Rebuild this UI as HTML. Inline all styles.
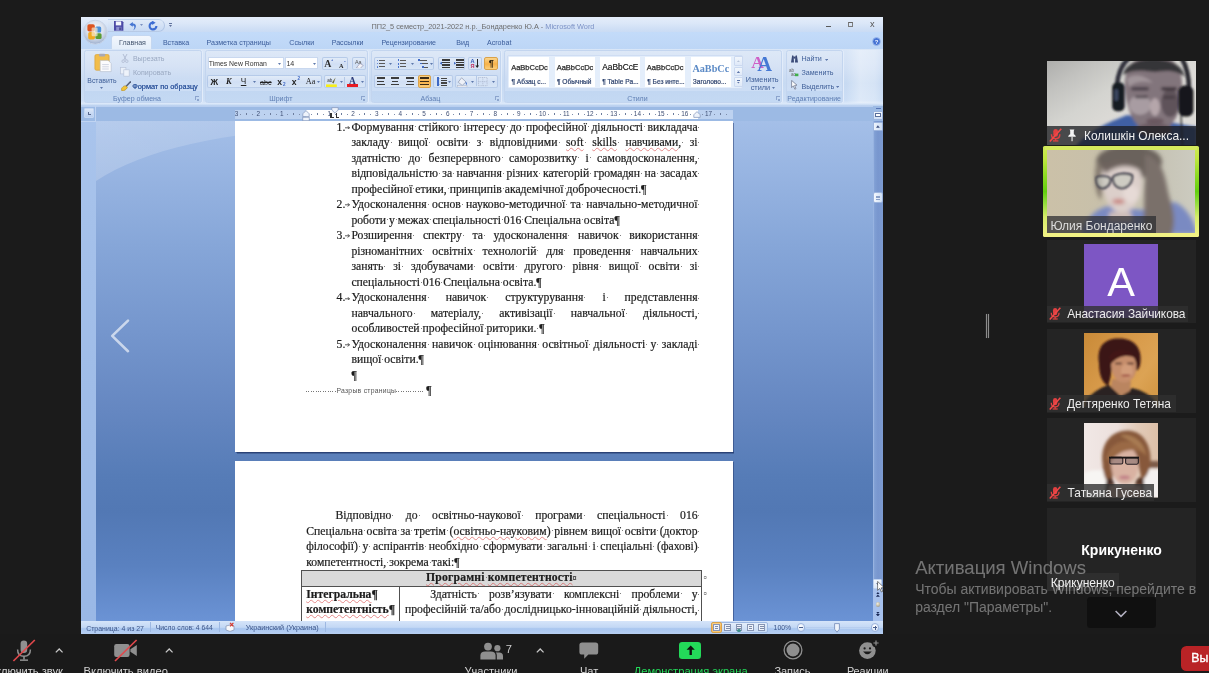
<!DOCTYPE html>
<html>
<head>
<meta charset="utf-8">
<style>
*{box-sizing:border-box;margin:0;padding:0}
html,body{width:1209px;height:673px;overflow:hidden;background:#1b1b1b;font-family:"Liberation Sans",sans-serif;}
#stage{position:absolute;left:0;top:0;width:1209px;height:673px;overflow:hidden;background:#1b1b1b}
#word{position:absolute;left:0;top:0;width:1209px;height:673px;filter:blur(.6px);will-change:transform}
#wclip{position:absolute;left:80.6px;top:17px;width:802.7px;height:617.8px;overflow:hidden}
#wclip>#word{left:-80.6px;top:-17px}
.dl{font-family:"Liberation Serif",serif;font-size:11.7px;color:#1c1c1c;-webkit-text-stroke:.2px #1c1c1c}
.dl i.d{display:inline-block;width:0;height:0;position:relative;vertical-align:baseline}
.dl i.d::after{content:"";position:absolute;left:1px;top:-4.2px;width:1px;height:1px;background:#555;border-radius:50%}
.dl b.pm{font-weight:400;font-family:"Liberation Serif",serif;font-size:11.7px;color:#1c1c1c}
.dl u.sq{text-decoration:underline wavy rgba(215,70,70,.6) .55px;text-underline-offset:.8px}
#zoomui{position:absolute;left:0;top:0;width:1209px;height:673px;filter:blur(.3px);will-change:transform}
</style>
</head>
<body>
<div id="stage">
<div id="wclip"><div id="word">
<div style="position:absolute;left:80.60px;top:17.00px;width:802.70px;height:617.80px;background:#c2d8f5;"></div><div style="position:absolute;left:80.60px;top:17.00px;width:802.70px;height:15.50px;background:linear-gradient(#e4edfa 0%,#dbe7f8 40%,#cfdff5 75%,#c8daf4 100%);"></div><div style="position:absolute;left:80.60px;top:32.30px;width:802.70px;height:17.00px;background:linear-gradient(#c3dbf9,#bdd6f6);"></div><div style="position:absolute;left:80.60px;top:49.00px;width:802.70px;height:56.50px;background:linear-gradient(#d9e6f7 0%,#d3e1f5 30%,#c7daf2 60%,#ccdef5 90%,#dce9f9 96%,#b5cdee 100%);"></div><div style="position:absolute;left:846.00px;top:50.30px;width:36.00px;height:52.70px;background:linear-gradient(90deg,rgba(255,255,255,0),rgba(255,255,255,.35) 40%,rgba(255,255,255,.25) 80%,rgba(255,255,255,.05));"></div><svg style="position:absolute;left:82.40px;top:18.60px;" width="26.4" height="26.4" viewBox="0 0 26.4 26.4">
<defs><radialGradient id="ob" cx="50%" cy="38%" r="62%"><stop offset="0" stop-color="#f6f8fc"/><stop offset=".55" stop-color="#dbe2ee"/><stop offset=".86" stop-color="#b3c1d9"/><stop offset="1" stop-color="#97abcd"/></radialGradient></defs>
<circle cx="13.2" cy="13.2" r="12" fill="url(#ob)" stroke="#c9d5e8" stroke-width="1"/>
<rect x="5.4" y="5.2" width="7.4" height="7.4" rx="1.8" fill="#dc5420"/>
<rect x="13.2" y="7.6" width="6" height="6" rx="1.5" fill="#4a90da"/>
<rect x="6.2" y="13" width="6.8" height="7.4" rx="1.7" fill="#f0aa22"/>
<rect x="13.4" y="14.2" width="6.2" height="5.8" rx="1.5" fill="#5c9c32"/>
<rect x="9.6" y="8.6" width="6" height="8.6" rx="1.2" fill="#f6ead0" opacity=".7"/>
</svg><div style="position:absolute;left:107.50px;top:19.00px;width:57.00px;height:12.80px;border:1px solid rgba(150,175,215,.55);border-left:none;border-top-color:rgba(170,195,230,.4);border-radius:0 7px 7px 0;background:linear-gradient(#e0eaf8,#c8daf3);"></div><svg style="position:absolute;left:114.20px;top:20.80px;" width="9.4" height="9.8" viewBox="0 0 9.4 9.8"><path d="M0 0H8.2L9.4 1.2V9.8H0Z" fill="#4c4aa6"/><rect x="1.8" y="0.4" width="5.4" height="4" fill="#f4f6fc"/><rect x="2.2" y="5.8" width="5.2" height="4" fill="#8e92d0"/><rect x="5.4" y="6.4" width="1.3" height="2.8" fill="#35357c"/></svg><svg style="position:absolute;left:127.60px;top:20.60px;" width="10" height="10" viewBox="0 0 10 10"><path d="M1.4 3.4 L4.8 1 L4.8 2.6 C8.6 2.4 9.2 6.8 5.2 9.6 C7 6.8 6.6 4.6 4.8 4.6 L4.8 5.8Z" fill="#4676d2"/></svg><svg style="position:absolute;left:140.30px;top:24.32px;" width="3.0" height="2.0" viewBox="0 0 3.0 2.0"><path d="M0 0 L3.0 0 L1.5 1.875Z" fill="#7a90c0"/></svg><svg style="position:absolute;left:147.80px;top:20.60px;" width="10" height="10" viewBox="0 0 10 10"><path d="M5 1.6 A3.4 3.4 0 1 0 8.4 5" fill="none" stroke="#3d6dd2" stroke-width="2.1"/><path d="M4.2 -0.4 L7.6 1.8 L4.2 4Z" fill="#3d6dd2"/></svg><div style="position:absolute;left:169.30px;top:22.80px;width:3.20px;height:0.80px;background:#60729c"></div><svg style="position:absolute;left:169.40px;top:24.73px;" width="3.0" height="2.0" viewBox="0 0 3.0 2.0"><path d="M0 0 L3.0 0 L1.5 1.875Z" fill="#60729c"/></svg><div style="position:absolute;left:371.4px;top:21.6px;height:10px;line-height:10px;font-size:7.33px;white-space:nowrap;color:#6d6d6d;font-family:'Liberation Sans'">ПП2_5 семестр_2021-2022 н.р._Бондаренко Ю.А - <span style="color:#7c92c6">Microsoft Word</span></div><div style="position:absolute;left:826.00px;top:26.20px;width:5.20px;height:1.30px;background:#5a5a5a"></div><div style="position:absolute;left:847.80px;top:22.00px;width:5.00px;height:4.60px;border:1px solid #7c7c7c;border-top:1.8px solid #666;"></div><div style="position:absolute;top:18.67px;height:11.96px;line-height:11.96px;font-size:9.2px;color:#555;font-weight:400;font-family:'Liberation Sans';white-space:nowrap;;left:672.40px;width:400px;text-align:center;">x</div><div style="position:absolute;left:111.40px;top:35.20px;width:41.00px;height:14.30px;border:1px solid #c4d7f1;border-bottom:none;border-radius:3px 3px 0 0;background:linear-gradient(#f3f7fd,#e4eefa);"></div><div style="position:absolute;top:38.95px;height:9.20px;line-height:9.20px;font-size:7.08px;color:#44556f;font-weight:400;font-family:'Liberation Sans';white-space:nowrap;;left:119.00px;">Главная</div><div style="position:absolute;top:38.95px;height:9.20px;line-height:9.20px;font-size:7.08px;color:#3a5c9a;font-weight:400;font-family:'Liberation Sans';white-space:nowrap;;left:162.90px;">Вставка</div><div style="position:absolute;top:38.95px;height:9.20px;line-height:9.20px;font-size:7.08px;color:#3a5c9a;font-weight:400;font-family:'Liberation Sans';white-space:nowrap;;left:206.60px;">Разметка страницы</div><div style="position:absolute;top:38.95px;height:9.20px;line-height:9.20px;font-size:7.08px;color:#3a5c9a;font-weight:400;font-family:'Liberation Sans';white-space:nowrap;;left:289.30px;">Ссылки</div><div style="position:absolute;top:38.95px;height:9.20px;line-height:9.20px;font-size:7.08px;color:#3a5c9a;font-weight:400;font-family:'Liberation Sans';white-space:nowrap;;left:331.70px;">Рассылки</div><div style="position:absolute;top:38.95px;height:9.20px;line-height:9.20px;font-size:7.08px;color:#3a5c9a;font-weight:400;font-family:'Liberation Sans';white-space:nowrap;;left:381.40px;">Рецензирование</div><div style="position:absolute;top:38.95px;height:9.20px;line-height:9.20px;font-size:7.08px;color:#3a5c9a;font-weight:400;font-family:'Liberation Sans';white-space:nowrap;;left:456.30px;">Вид</div><div style="position:absolute;top:38.95px;height:9.20px;line-height:9.20px;font-size:7.08px;color:#3a5c9a;font-weight:400;font-family:'Liberation Sans';white-space:nowrap;;left:487.00px;">Acrobat</div><svg style="position:absolute;left:871.80px;top:36.60px;" width="9" height="9" viewBox="0 0 9 9"><circle cx="4.5" cy="4.5" r="3.9" fill="#4673d4" stroke="#a4c0ee" stroke-width=".8"/><text x="4.5" y="6.8" font-size="6" font-weight="700" fill="#eef4ff" text-anchor="middle" font-family="Liberation Sans">?</text></svg><div style="position:absolute;left:83.60px;top:50.30px;width:118.20px;height:52.70px;border:1px solid #c3d5ef;border-radius:2.5px;box-shadow:1px 0 0 #e2ecfa;background:linear-gradient(#dde8f7 0%,#d7e3f5 28%,#cbdcf3 55%,#cddef5 78%,#c2d7f2 79%,#c4d9f3 100%);"></div><div style="position:absolute;top:94.47px;height:9.17px;line-height:9.17px;font-size:7.05px;color:#5f7fb4;font-weight:400;font-family:'Liberation Sans';white-space:nowrap;;left:-63.00px;width:400px;text-align:center;">Буфер обмена</div><div style="position:absolute;left:195.30px;top:96.20px;width:4.00px;height:4.00px;border-left:1px solid #7f98c4;border-top:1px solid #7f98c4;opacity:.8"></div><div style="position:absolute;left:197.30px;top:98.60px;width:2.00px;height:2.00px;background:#7f98c4;opacity:.8"></div><svg style="position:absolute;left:93.60px;top:53.40px;" width="19" height="20" viewBox="0 0 19 20">
<rect x="0.9" y="1.6" width="14.2" height="15.6" rx="1.4" fill="#f2bd4a" stroke="#d7a23a" stroke-width=".7"/>
<rect x="5" y="0.8" width="6.2" height="2.6" rx="1" fill="#a9a9b4"/>
<path d="M6.2 7.4 H14.2 L17.2 10.4 V18.6 H6.2Z" fill="#fbfbfd" stroke="#b4bccb" stroke-width=".6"/>
<path d="M8.2 11.6H14.8M8.2 13.8H14.8M8.2 16H14.8" stroke="#c5ccda" stroke-width=".8"/></svg><div style="position:absolute;top:76.66px;height:8.97px;line-height:8.97px;font-size:6.9px;color:#3f5f98;font-weight:400;font-family:'Liberation Sans';white-space:nowrap;;left:-98.10px;width:400px;text-align:center;">Вставить</div><svg style="position:absolute;left:100.20px;top:86.53px;" width="3.0" height="2.0" viewBox="0 0 3.0 2.0"><path d="M0 0 L3.0 0 L1.5 1.875Z" fill="#5f79ac"/></svg><svg style="position:absolute;left:121.40px;top:54.40px;" width="8" height="9" viewBox="0 0 8 9"><path d="M2 0 L5.2 6M6 0 L2.8 6" stroke="#aeb9d0" stroke-width=".9"/><circle cx="2.2" cy="7.2" r="1.3" fill="none" stroke="#aeb9d0" stroke-width=".8"/><circle cx="5.8" cy="7.2" r="1.3" fill="none" stroke="#aeb9d0" stroke-width=".8"/></svg><div style="position:absolute;top:55.33px;height:9.23px;line-height:9.23px;font-size:7.1px;color:#9aa9c2;font-weight:400;font-family:'Liberation Sans';white-space:nowrap;;left:132.90px;">Вырезать</div><svg style="position:absolute;left:120.40px;top:67.40px;" width="10" height="10" viewBox="0 0 10 10"><rect x=".5" y=".5" width="5.4" height="6.4" fill="#eaf0f9" stroke="#b9c4d9" stroke-width=".7"/><rect x="3.8" y="2.8" width="5.4" height="6.4" fill="#eef3fa" stroke="#b9c4d9" stroke-width=".7"/></svg><div style="position:absolute;top:68.84px;height:9.23px;line-height:9.23px;font-size:7.1px;color:#9aa9c2;font-weight:400;font-family:'Liberation Sans';white-space:nowrap;;left:132.90px;">Копировать</div><svg style="position:absolute;left:120.60px;top:80.60px;" width="10.4" height="10.4" viewBox="0 0 10.4 10.4"><path d="M9.8 0.4 L5 5.6" stroke="#55607a" stroke-width="1.5"/><path d="M0.6 7.6 C2.6 4 5.2 4.4 6.4 6.4 C5.2 8.6 3.4 10.2 0.6 9.6Z" fill="#f2c436" stroke="#b5891a" stroke-width=".6"/></svg><div style="position:absolute;top:81.79px;height:9.52px;line-height:9.52px;font-size:7.32px;color:#33599f;font-weight:400;font-family:'Liberation Sans';white-space:nowrap;text-shadow:0 0 .4px #33599f;;left:132.20px;">Формат по образцу</div><div style="position:absolute;left:205.20px;top:50.30px;width:162.60px;height:52.70px;border:1px solid #c3d5ef;border-radius:2.5px;box-shadow:1px 0 0 #e2ecfa;background:linear-gradient(#dde8f7 0%,#d7e3f5 28%,#cbdcf3 55%,#cddef5 78%,#c2d7f2 79%,#c4d9f3 100%);"></div><div style="position:absolute;top:94.47px;height:9.17px;line-height:9.17px;font-size:7.05px;color:#5f7fb4;font-weight:400;font-family:'Liberation Sans';white-space:nowrap;;left:80.80px;width:400px;text-align:center;">Шрифт</div><div style="position:absolute;left:361.30px;top:96.20px;width:4.00px;height:4.00px;border-left:1px solid #7f98c4;border-top:1px solid #7f98c4;opacity:.8"></div><div style="position:absolute;left:363.30px;top:98.60px;width:2.00px;height:2.00px;background:#7f98c4;opacity:.8"></div><div style="position:absolute;left:207.70px;top:57.20px;width:76.00px;height:12.20px;background:#fff;border:1px solid #c9d8ef;"></div><div style="position:absolute;top:60.08px;height:8.93px;line-height:8.93px;font-size:6.87px;color:#333;font-weight:400;font-family:'Liberation Sans';white-space:nowrap;;left:208.80px;">Times New Roman</div><svg style="position:absolute;left:278.30px;top:62.73px;" width="3.0" height="2.0" viewBox="0 0 3.0 2.0"><path d="M0 0 L3.0 0 L1.5 1.875Z" fill="#5f79ac"/></svg><div style="position:absolute;left:285.40px;top:57.20px;width:32.40px;height:12.20px;background:#fff;border:1px solid #c9d8ef;"></div><div style="position:absolute;top:60.23px;height:9.23px;line-height:9.23px;font-size:7.1px;color:#333;font-weight:400;font-family:'Liberation Sans';white-space:nowrap;;left:286.40px;">14</div><svg style="position:absolute;left:312.50px;top:62.73px;" width="3.0" height="2.0" viewBox="0 0 3.0 2.0"><path d="M0 0 L3.0 0 L1.5 1.875Z" fill="#5f79ac"/></svg><div style="position:absolute;left:321.50px;top:56.80px;width:26.70px;height:13.10px;border:1px solid rgba(160,185,225,.6);border-radius:2px;background:linear-gradient(#e1ebf8,#d1dff4 55%,#d7e5f6);"></div><div style="position:absolute;top:57.88px;height:12.74px;line-height:12.74px;font-size:9.8px;color:#2b2b2b;font-weight:700;font-family:'Liberation Serif';white-space:nowrap;;left:127.70px;width:400px;text-align:center;">A</div><div style="position:absolute;left:331.20px;top:59.20px;width:2.20px;height:1.60px;background:#4a6bc0;clip-path:polygon(50% 0,100% 100%,0 100%)"></div><div style="position:absolute;top:61.66px;height:8.19px;line-height:8.19px;font-size:6.3px;color:#2b2b2b;font-weight:700;font-family:'Liberation Serif';white-space:nowrap;;left:141.20px;width:400px;text-align:center;">A</div><div style="position:absolute;left:343.80px;top:60.60px;width:2.20px;height:1.60px;background:#4a6bc0;clip-path:polygon(0 0,100% 0,50% 100%)"></div><div style="position:absolute;left:351.60px;top:56.80px;width:14.20px;height:13.10px;border:1px solid rgba(160,185,225,.6);border-radius:2px;background:linear-gradient(#e1ebf8,#d1dff4 55%,#d7e5f6);"></div><svg style="position:absolute;left:354.00px;top:58.80px;" width="10" height="9.6" viewBox="0 0 10 9.6"><text x="1" y="5.4" font-size="5.4" fill="#555" font-family="Liberation Sans">Aa</text><path d="M2.4 8.8 L6 4.4 L9.2 6.4 L6 9.6Z" fill="#f4f4f8" stroke="#8c8ca8" stroke-width=".6"/></svg><div style="position:absolute;left:207.30px;top:75.30px;width:114.50px;height:12.50px;border:1px solid rgba(160,185,225,.6);border-radius:2px;background:linear-gradient(#e1ebf8,#d1dff4 55%,#d7e5f6);"></div><div style="position:absolute;top:76.69px;height:10.92px;line-height:10.92px;font-size:8.4px;color:#222;font-weight:700;font-family:'Liberation Sans';white-space:nowrap;;left:14.40px;width:400px;text-align:center;">Ж</div><div style="position:absolute;top:76.69px;height:10.92px;line-height:10.92px;font-size:8.4px;color:#222;font-weight:700;font-family:'Liberation Serif';white-space:nowrap;font-style:italic;;left:28.80px;width:400px;text-align:center;">К</div><div style="position:absolute;top:76.62px;height:10.66px;line-height:10.66px;font-size:8.2px;color:#222;font-weight:400;font-family:'Liberation Sans';white-space:nowrap;text-decoration:underline;;left:43.60px;width:400px;text-align:center;">Ч</div><svg style="position:absolute;left:252.80px;top:81.12px;" width="3.0" height="2.0" viewBox="0 0 3.0 2.0"><path d="M0 0 L3.0 0 L1.5 1.875Z" fill="#5f79ac"/></svg><div style="position:absolute;top:77.57px;height:9.36px;line-height:9.36px;font-size:7.2px;color:#222;font-weight:400;font-family:'Liberation Sans';white-space:nowrap;text-decoration:line-through;;left:65.80px;width:400px;text-align:center;">abc</div><div style="position:absolute;top:76.66px;height:11.18px;line-height:11.18px;font-size:8.6px;color:#222;font-weight:700;font-family:'Liberation Sans';white-space:nowrap;;left:79.60px;width:400px;text-align:center;">x</div><div style="position:absolute;top:82.16px;height:5.98px;line-height:5.98px;font-size:4.6px;color:#3d67c4;font-weight:700;font-family:'Liberation Sans';white-space:nowrap;;left:84.20px;width:400px;text-align:center;">2</div><div style="position:absolute;top:76.66px;height:11.18px;line-height:11.18px;font-size:8.6px;color:#222;font-weight:700;font-family:'Liberation Sans';white-space:nowrap;;left:94.20px;width:400px;text-align:center;">x</div><div style="position:absolute;top:76.16px;height:5.98px;line-height:5.98px;font-size:4.6px;color:#3d67c4;font-weight:700;font-family:'Liberation Sans';white-space:nowrap;;left:98.80px;width:400px;text-align:center;">2</div><div style="position:absolute;top:76.92px;height:10.66px;line-height:10.66px;font-size:8.2px;color:#222;font-weight:400;font-family:'Liberation Serif';white-space:nowrap;;left:110.60px;width:400px;text-align:center;">Aa</div><svg style="position:absolute;left:316.70px;top:81.12px;" width="3.0" height="2.0" viewBox="0 0 3.0 2.0"><path d="M0 0 L3.0 0 L1.5 1.875Z" fill="#5f79ac"/></svg><div style="position:absolute;left:323.70px;top:75.30px;width:42.10px;height:12.50px;border:1px solid rgba(160,185,225,.6);border-radius:2px;background:linear-gradient(#e1ebf8,#d1dff4 55%,#d7e5f6);"></div><svg style="position:absolute;left:325.60px;top:76.60px;" width="11" height="10.6" viewBox="0 0 11 10.6"><text x="1.2" y="5.2" font-size="4.6" fill="#333" font-family="Liberation Sans">ab</text><path d="M9.6 0.6 L6 5.4 L7.6 6.4Z" fill="#6a6a3a"/><rect x="0" y="7.4" width="10.8" height="2.8" fill="#f7ee19"/></svg><svg style="position:absolute;left:339.80px;top:81.12px;" width="3.0" height="2.0" viewBox="0 0 3.0 2.0"><path d="M0 0 L3.0 0 L1.5 1.875Z" fill="#5f79ac"/></svg><div style="position:absolute;left:344.20px;top:76.60px;width:0.80px;height:10.00px;background:#b4c8e6"></div><div style="position:absolute;top:74.84px;height:12.22px;line-height:12.22px;font-size:9.4px;color:#2a3a78;font-weight:700;font-family:'Liberation Serif';white-space:nowrap;;left:152.40px;width:400px;text-align:center;">A</div><div style="position:absolute;left:347.00px;top:84.00px;width:10.80px;height:2.60px;background:#e81c24"></div><svg style="position:absolute;left:360.50px;top:81.12px;" width="3.0" height="2.0" viewBox="0 0 3.0 2.0"><path d="M0 0 L3.0 0 L1.5 1.875Z" fill="#5f79ac"/></svg><div style="position:absolute;left:370.80px;top:50.30px;width:130.60px;height:52.70px;border:1px solid #c3d5ef;border-radius:2.5px;box-shadow:1px 0 0 #e2ecfa;background:linear-gradient(#dde8f7 0%,#d7e3f5 28%,#cbdcf3 55%,#cddef5 78%,#c2d7f2 79%,#c4d9f3 100%);"></div><div style="position:absolute;top:94.47px;height:9.17px;line-height:9.17px;font-size:7.05px;color:#5f7fb4;font-weight:400;font-family:'Liberation Sans';white-space:nowrap;;left:230.40px;width:400px;text-align:center;">Абзац</div><div style="position:absolute;left:494.90px;top:96.20px;width:4.00px;height:4.00px;border-left:1px solid #7f98c4;border-top:1px solid #7f98c4;opacity:.8"></div><div style="position:absolute;left:496.90px;top:98.60px;width:2.00px;height:2.00px;background:#7f98c4;opacity:.8"></div><div style="position:absolute;left:373.50px;top:56.80px;width:60.60px;height:13.50px;border:1px solid rgba(160,185,225,.6);border-radius:2px;background:linear-gradient(#e1ebf8,#d1dff4 55%,#d7e5f6);"></div><div style="position:absolute;left:377.00px;top:59.50px;width:1.30px;height:1.30px;background:#4a74cc;border-radius:1px"></div><div style="position:absolute;left:379.40px;top:59.60px;width:5.20px;height:1.10px;background:#5a5a5a"></div><div style="position:absolute;left:377.00px;top:62.90px;width:1.30px;height:1.30px;background:#4a74cc;border-radius:1px"></div><div style="position:absolute;left:379.40px;top:63.00px;width:5.20px;height:1.10px;background:#5a5a5a"></div><div style="position:absolute;left:377.00px;top:66.30px;width:1.30px;height:1.30px;background:#4a74cc;border-radius:1px"></div><div style="position:absolute;left:379.40px;top:66.40px;width:5.20px;height:1.10px;background:#5a5a5a"></div><svg style="position:absolute;left:388.50px;top:62.73px;" width="3.0" height="2.0" viewBox="0 0 3.0 2.0"><path d="M0 0 L3.0 0 L1.5 1.875Z" fill="#5f79ac"/></svg><div style="position:absolute;left:397.80px;top:59.20px;width:1.10px;height:2.00px;background:#4a74cc"></div><div style="position:absolute;left:400.20px;top:59.60px;width:5.40px;height:1.10px;background:#5a5a5a"></div><div style="position:absolute;left:397.80px;top:62.60px;width:1.10px;height:2.00px;background:#4a74cc"></div><div style="position:absolute;left:400.20px;top:63.00px;width:5.40px;height:1.10px;background:#5a5a5a"></div><div style="position:absolute;left:397.80px;top:66.00px;width:1.10px;height:2.00px;background:#4a74cc"></div><div style="position:absolute;left:400.20px;top:66.40px;width:5.40px;height:1.10px;background:#5a5a5a"></div><svg style="position:absolute;left:410.80px;top:62.73px;" width="3.0" height="2.0" viewBox="0 0 3.0 2.0"><path d="M0 0 L3.0 0 L1.5 1.875Z" fill="#5f79ac"/></svg><div style="position:absolute;left:418.40px;top:59.20px;width:1.20px;height:1.60px;background:#3f69c4"></div><div style="position:absolute;left:420.40px;top:59.60px;width:6.50px;height:1.10px;background:#555"></div><div style="position:absolute;left:420.40px;top:62.80px;width:1.20px;height:1.60px;background:#3f69c4"></div><div style="position:absolute;left:422.40px;top:63.20px;width:5.50px;height:1.10px;background:#555"></div><div style="position:absolute;left:422.40px;top:66.40px;width:1.20px;height:1.60px;background:#3f69c4"></div><div style="position:absolute;left:424.40px;top:66.80px;width:4.00px;height:1.10px;background:#555"></div><svg style="position:absolute;left:429.50px;top:62.73px;" width="3.0" height="2.0" viewBox="0 0 3.0 2.0"><path d="M0 0 L3.0 0 L1.5 1.875Z" fill="#5f79ac"/></svg><div style="position:absolute;left:437.70px;top:56.80px;width:27.10px;height:13.50px;border:1px solid rgba(160,185,225,.6);border-radius:2px;background:linear-gradient(#e1ebf8,#d1dff4 55%,#d7e5f6);"></div><div style="position:absolute;left:442.00px;top:59.20px;width:7.60px;height:1.40px;background:#3a3a3a"></div><div style="position:absolute;left:442.00px;top:61.70px;width:7.60px;height:1.40px;background:#3a3a3a"></div><div style="position:absolute;left:442.00px;top:64.20px;width:7.60px;height:1.40px;background:#3a3a3a"></div><div style="position:absolute;left:442.00px;top:66.70px;width:7.60px;height:1.40px;background:#3a3a3a"></div><div style="position:absolute;left:439.60px;top:61.80px;width:2.40px;height:3.00px;background:#3f69c4;clip-path:polygon(100% 0,100% 100%,0 50%)"></div><div style="position:absolute;left:456.20px;top:59.20px;width:7.60px;height:1.40px;background:#3a3a3a"></div><div style="position:absolute;left:456.20px;top:61.70px;width:7.60px;height:1.40px;background:#3a3a3a"></div><div style="position:absolute;left:456.20px;top:64.20px;width:7.60px;height:1.40px;background:#3a3a3a"></div><div style="position:absolute;left:456.20px;top:66.70px;width:7.60px;height:1.40px;background:#3a3a3a"></div><div style="position:absolute;left:453.80px;top:61.80px;width:2.40px;height:3.00px;background:#3f69c4;clip-path:polygon(0 0,0 100%,100% 50%)"></div><div style="position:absolute;left:467.60px;top:56.80px;width:14.30px;height:13.50px;border:1px solid rgba(160,185,225,.6);border-radius:2px;background:linear-gradient(#e1ebf8,#d1dff4 55%,#d7e5f6);"></div><div style="position:absolute;top:57.71px;height:7.28px;line-height:7.28px;font-size:5.6px;color:#3358b5;font-weight:700;font-family:'Liberation Sans';white-space:nowrap;;left:272.60px;width:400px;text-align:center;">A</div><div style="position:absolute;top:63.31px;height:7.28px;line-height:7.28px;font-size:5.6px;color:#c03060;font-weight:700;font-family:'Liberation Sans';white-space:nowrap;;left:272.60px;width:400px;text-align:center;">Я</div><div style="position:absolute;left:476.60px;top:58.60px;width:1.20px;height:8.20px;background:#222"></div><div style="position:absolute;left:475.30px;top:65.40px;width:3.80px;height:2.60px;background:#222;clip-path:polygon(0 0,100% 0,50% 100%)"></div><div style="position:absolute;left:484.30px;top:56.80px;width:14.10px;height:13.50px;border:1px solid #d9a24a;border-radius:2px;background:linear-gradient(#fbd48a,#f7b24a 55%,#fbcf7c);"></div><div style="position:absolute;top:57.97px;height:11.96px;line-height:11.96px;font-size:9.2px;color:#2e2210;font-weight:700;font-family:'Liberation Sans';white-space:nowrap;;left:291.40px;width:400px;text-align:center;">¶</div><div style="position:absolute;left:373.50px;top:75.30px;width:57.80px;height:12.50px;border:1px solid rgba(160,185,225,.6);border-radius:2px;background:linear-gradient(#e1ebf8,#d1dff4 55%,#d7e5f6);"></div><div style="position:absolute;left:376.80px;top:77.40px;width:8.40px;height:1.70px;background:#3c3c3c"></div><div style="position:absolute;left:376.80px;top:80.50px;width:6.72px;height:1.70px;background:#3c3c3c"></div><div style="position:absolute;left:376.80px;top:83.60px;width:8.40px;height:1.70px;background:#3c3c3c"></div><div style="position:absolute;left:390.80px;top:77.40px;width:8.40px;height:1.70px;background:#3c3c3c"></div><div style="position:absolute;left:391.85px;top:80.50px;width:6.30px;height:1.70px;background:#3c3c3c"></div><div style="position:absolute;left:390.80px;top:83.60px;width:8.40px;height:1.70px;background:#3c3c3c"></div><div style="position:absolute;left:405.60px;top:77.40px;width:8.40px;height:1.70px;background:#3c3c3c"></div><div style="position:absolute;left:407.28px;top:80.50px;width:6.72px;height:1.70px;background:#3c3c3c"></div><div style="position:absolute;left:405.60px;top:83.60px;width:8.40px;height:1.70px;background:#3c3c3c"></div><div style="position:absolute;left:417.70px;top:75.30px;width:13.50px;height:12.50px;border:1px solid #d9a24a;border-radius:2px;background:linear-gradient(#fbd48a,#f7b24a 55%,#fbcf7c);"></div><div style="position:absolute;left:420.30px;top:77.40px;width:8.40px;height:1.70px;background:#3a2c18"></div><div style="position:absolute;left:420.30px;top:80.50px;width:8.40px;height:1.70px;background:#3a2c18"></div><div style="position:absolute;left:420.30px;top:83.60px;width:8.40px;height:1.70px;background:#3a2c18"></div><div style="position:absolute;left:433.40px;top:75.30px;width:20.00px;height:12.50px;border:1px solid rgba(160,185,225,.6);border-radius:2px;background:linear-gradient(#e1ebf8,#d1dff4 55%,#d7e5f6);"></div><div style="position:absolute;left:437.40px;top:77.40px;width:1.40px;height:8.20px;background:#3f69c4"></div><div style="position:absolute;left:436.50px;top:77.00px;width:3.20px;height:2.00px;background:#3f69c4;clip-path:polygon(50% 0,100% 100%,0 100%)"></div><div style="position:absolute;left:436.50px;top:84.00px;width:3.20px;height:2.00px;background:#3f69c4;clip-path:polygon(0 0,100% 0,50% 100%)"></div><div style="position:absolute;left:441.00px;top:77.80px;width:5.80px;height:1.30px;background:#444"></div><div style="position:absolute;left:441.00px;top:80.10px;width:5.80px;height:1.30px;background:#444"></div><div style="position:absolute;left:441.00px;top:82.40px;width:5.80px;height:1.30px;background:#444"></div><div style="position:absolute;left:441.00px;top:84.70px;width:5.80px;height:1.30px;background:#444"></div><svg style="position:absolute;left:447.70px;top:81.12px;" width="3.0" height="2.0" viewBox="0 0 3.0 2.0"><path d="M0 0 L3.0 0 L1.5 1.875Z" fill="#5f79ac"/></svg><div style="position:absolute;left:455.20px;top:75.30px;width:42.40px;height:12.50px;border:1px solid rgba(160,185,225,.6);border-radius:2px;background:linear-gradient(#e1ebf8,#d1dff4 55%,#d7e5f6);"></div><svg style="position:absolute;left:457.40px;top:76.60px;" width="11" height="10.4" viewBox="0 0 11 10.4"><path d="M4.6 0.8 L9 5 L5.2 8.4 L1.2 5.2Z" fill="#eef1f8" stroke="#8d97ad" stroke-width=".7"/><path d="M8.6 4.6 C10.2 6 10.4 7.4 9.6 8 C8.8 7.4 8.4 6 8.6 4.6Z" fill="#4f7bd0"/><rect x="0.4" y="8.8" width="9.6" height="1.4" fill="#e8e8ee" stroke="#a4abbd" stroke-width=".4"/></svg><svg style="position:absolute;left:470.90px;top:81.12px;" width="3.0" height="2.0" viewBox="0 0 3.0 2.0"><path d="M0 0 L3.0 0 L1.5 1.875Z" fill="#5f79ac"/></svg><div style="position:absolute;left:475.60px;top:76.40px;width:0.80px;height:10.00px;background:#b4c8e6"></div><svg style="position:absolute;left:478.40px;top:77.20px;" width="9.8" height="9.4" viewBox="0 0 9.8 9.4"><rect x=".5" y=".5" width="8.6" height="8.2" fill="none" stroke="#a9b4cc" stroke-width=".8" stroke-dasharray="1 .8"/><path d="M4.8 .5V8.7M.5 4.6H9.1" stroke="#a9b4cc" stroke-width=".7" stroke-dasharray="1 .8"/></svg><svg style="position:absolute;left:491.80px;top:81.12px;" width="3.0" height="2.0" viewBox="0 0 3.0 2.0"><path d="M0 0 L3.0 0 L1.5 1.875Z" fill="#5f79ac"/></svg><div style="position:absolute;left:504.00px;top:50.30px;width:278.40px;height:52.70px;border:1px solid #c3d5ef;border-radius:2.5px;box-shadow:1px 0 0 #e2ecfa;background:linear-gradient(#dde8f7 0%,#d7e3f5 28%,#cbdcf3 55%,#cddef5 78%,#c2d7f2 79%,#c4d9f3 100%);"></div><div style="position:absolute;top:94.47px;height:9.17px;line-height:9.17px;font-size:7.05px;color:#5f7fb4;font-weight:400;font-family:'Liberation Sans';white-space:nowrap;;left:437.50px;width:400px;text-align:center;">Стили</div><div style="position:absolute;left:775.90px;top:96.20px;width:4.00px;height:4.00px;border-left:1px solid #7f98c4;border-top:1px solid #7f98c4;opacity:.8"></div><div style="position:absolute;left:777.90px;top:98.60px;width:2.00px;height:2.00px;background:#7f98c4;opacity:.8"></div><div style="position:absolute;left:506.60px;top:55.40px;width:236.40px;height:33.40px;background:#e4eefb;border:1px solid #cfddf3;border-radius:2px;"></div><div style="position:absolute;left:509.30px;top:57.40px;width:40.10px;height:29.40px;background:#fff;"></div><div style="position:absolute;top:63.27px;height:9.75px;line-height:9.75px;font-size:7.5px;color:#2c2c2c;font-weight:400;font-family:'Liberation Sans';white-space:nowrap;-webkit-text-stroke:.25px #2c2c2c;left:329.50px;width:400px;text-align:center;">AaBbCcDc</div><div style="position:absolute;top:78.16px;height:8.58px;line-height:8.58px;font-size:6.6px;color:#2f446f;font-weight:400;font-family:'Liberation Sans';white-space:nowrap;-webkit-text-stroke:.2px #2f446f;left:511.50px;">¶ Абзац с...</div><div style="position:absolute;left:554.80px;top:57.40px;width:40.10px;height:29.40px;background:#fff;"></div><div style="position:absolute;top:63.27px;height:9.75px;line-height:9.75px;font-size:7.5px;color:#2c2c2c;font-weight:400;font-family:'Liberation Sans';white-space:nowrap;-webkit-text-stroke:.25px #2c2c2c;left:375.00px;width:400px;text-align:center;">AaBbCcDc</div><div style="position:absolute;top:78.16px;height:8.58px;line-height:8.58px;font-size:6.6px;color:#2f446f;font-weight:400;font-family:'Liberation Sans';white-space:nowrap;-webkit-text-stroke:.2px #2f446f;left:557.00px;">¶ Обычный</div><div style="position:absolute;left:600.10px;top:57.40px;width:40.10px;height:29.40px;background:#fff;"></div><div style="position:absolute;top:62.09px;height:10.92px;line-height:10.92px;font-size:8.4px;color:#3b3b3b;font-weight:400;font-family:'Liberation Sans';white-space:nowrap;text-shadow:0 0 .3px #333;left:420.30px;width:400px;text-align:center;">AaBbCcE</div><div style="position:absolute;top:78.16px;height:8.58px;line-height:8.58px;font-size:6.6px;color:#2f446f;font-weight:400;font-family:'Liberation Sans';white-space:nowrap;-webkit-text-stroke:.2px #2f446f;left:602.30px;">¶ Table Pa...</div><div style="position:absolute;left:645.00px;top:57.40px;width:40.10px;height:29.40px;background:#fff;"></div><div style="position:absolute;top:63.27px;height:9.75px;line-height:9.75px;font-size:7.5px;color:#2c2c2c;font-weight:400;font-family:'Liberation Sans';white-space:nowrap;-webkit-text-stroke:.25px #2c2c2c;left:465.20px;width:400px;text-align:center;">AaBbCcDc</div><div style="position:absolute;top:78.16px;height:8.58px;line-height:8.58px;font-size:6.6px;color:#2f446f;font-weight:400;font-family:'Liberation Sans';white-space:nowrap;-webkit-text-stroke:.2px #2f446f;left:647.20px;">¶ Без инте...</div><div style="position:absolute;left:690.60px;top:57.40px;width:40.10px;height:29.40px;background:#fff;"></div><div style="position:absolute;top:61.52px;height:13.26px;line-height:13.26px;font-size:10.2px;color:#5b8ac6;font-weight:700;font-family:'Liberation Serif';white-space:nowrap;;left:510.80px;width:400px;text-align:center;">AaBbCc</div><div style="position:absolute;top:78.16px;height:8.58px;line-height:8.58px;font-size:6.6px;color:#2f446f;font-weight:400;font-family:'Liberation Sans';white-space:nowrap;-webkit-text-stroke:.2px #2f446f;left:692.80px;">Заголово...</div><div style="position:absolute;left:734.20px;top:56.40px;width:8.40px;height:9.80px;border:1px solid #cbd9f0;background:linear-gradient(#f1f6fc,#dfe9f8);border-radius:1px"></div><div style="position:absolute;left:734.20px;top:66.60px;width:8.40px;height:9.80px;border:1px solid #cbd9f0;background:linear-gradient(#f1f6fc,#dfe9f8);border-radius:1px"></div><div style="position:absolute;left:734.20px;top:76.80px;width:8.40px;height:9.80px;border:1px solid #cbd9f0;background:linear-gradient(#f1f6fc,#dfe9f8);border-radius:1px"></div><div style="position:absolute;left:736.70px;top:60.30px;width:3.40px;height:2.00px;background:#b8c4da;clip-path:polygon(50% 0,100% 100%,0 100%)"></div><div style="position:absolute;left:736.70px;top:70.90px;width:3.40px;height:2.00px;background:#5b74a8;clip-path:polygon(50% 0,100% 100%,0 100%)"></div><div style="position:absolute;left:736.50px;top:80.00px;width:3.80px;height:0.90px;background:#5b74a8"></div><div style="position:absolute;left:736.70px;top:81.60px;width:3.40px;height:2.00px;background:#5b74a8;clip-path:polygon(0 0,100% 0,50% 100%)"></div><div style="position:absolute;top:50.57px;height:22.75px;line-height:22.75px;font-size:17.5px;color:#cf5fc6;font-weight:700;font-family:'Liberation Serif';white-space:nowrap;;left:557.60px;width:400px;text-align:center;">A</div><div style="position:absolute;top:50.83px;height:26.65px;line-height:26.65px;font-size:20.5px;color:#4478d4;font-weight:700;font-family:'Liberation Serif';white-space:nowrap;;left:564.60px;width:400px;text-align:center;">A</div><div style="position:absolute;top:74.90px;height:9.49px;line-height:9.49px;font-size:7.3px;color:#3f5f98;font-weight:400;font-family:'Liberation Sans';white-space:nowrap;;left:562.20px;width:400px;text-align:center;">Изменить</div><div style="position:absolute;top:83.00px;height:9.49px;line-height:9.49px;font-size:7.3px;color:#3f5f98;font-weight:400;font-family:'Liberation Sans';white-space:nowrap;;left:560.40px;width:400px;text-align:center;">стили</div><svg style="position:absolute;left:771.90px;top:87.33px;" width="3.0" height="2.0" viewBox="0 0 3.0 2.0"><path d="M0 0 L3.0 0 L1.5 1.875Z" fill="#5f79ac"/></svg><div style="position:absolute;left:785.70px;top:50.30px;width:57.80px;height:52.70px;border:1px solid #c3d5ef;border-radius:2.5px;box-shadow:1px 0 0 #e2ecfa;background:linear-gradient(#dde8f7 0%,#d7e3f5 28%,#cbdcf3 55%,#cddef5 78%,#c2d7f2 79%,#c4d9f3 100%);"></div><div style="position:absolute;top:94.47px;height:9.17px;line-height:9.17px;font-size:7.05px;color:#5f7fb4;font-weight:400;font-family:'Liberation Sans';white-space:nowrap;;left:614.20px;width:400px;text-align:center;">Редактирование</div><svg style="position:absolute;left:789.60px;top:54.20px;" width="9" height="9" viewBox="0 0 9 9"><path d="M1 8.4 L2 2.2 Q2.4 .6 3.6 2 L4 8.4Z M5 8.4 L5.4 2 Q6.6 .6 7 2.2 L8 8.4Z" fill="#3a4a78"/><rect x="3.4" y="2.6" width="2.2" height="2" fill="#3a4a78"/></svg><div style="position:absolute;top:55.30px;height:9.29px;line-height:9.29px;font-size:7.15px;color:#3f5f98;font-weight:400;font-family:'Liberation Sans';white-space:nowrap;;left:801.40px;">Найти</div><svg style="position:absolute;left:825.04px;top:58.69px;" width="3.12" height="2.08" viewBox="0 0 3.12 2.08"><path d="M0 0 L3.12 0 L1.56 1.9500000000000002Z" fill="#5f79ac"/></svg><svg style="position:absolute;left:789.40px;top:67.40px;" width="10" height="10" viewBox="0 0 10 10"><text x="0" y="4.6" font-size="4.6" fill="#666" font-family="Liberation Sans">ab</text><text x="2" y="9.4" font-size="4.6" fill="#666" font-family="Liberation Sans">ac</text><rect x="6" y="6.6" width="3.4" height="2.6" fill="#3fae49"/></svg><div style="position:absolute;top:68.81px;height:9.29px;line-height:9.29px;font-size:7.15px;color:#3f5f98;font-weight:400;font-family:'Liberation Sans';white-space:nowrap;;left:801.40px;">Заменить</div><svg style="position:absolute;left:791.00px;top:80.40px;" width="7" height="10" viewBox="0 0 7 10"><path d="M.6 .4 L.6 7.6 L2.4 5.8 L3.8 9.2 L5 8.6 L3.6 5.4 L6 5.2Z" fill="#fcfcfc" stroke="#666f86" stroke-width=".7"/></svg><div style="position:absolute;top:82.61px;height:9.29px;line-height:9.29px;font-size:7.15px;color:#3f5f98;font-weight:400;font-family:'Liberation Sans';white-space:nowrap;;left:801.40px;">Выделить</div><svg style="position:absolute;left:835.84px;top:86.09px;" width="3.12" height="2.08" viewBox="0 0 3.12 2.08"><path d="M0 0 L3.12 0 L1.56 1.9500000000000002Z" fill="#5f79ac"/></svg>
<div style="position:absolute;left:80.60px;top:105.50px;width:802.70px;height:16.00px;background:#9cbae4;"></div><div style="position:absolute;left:80.60px;top:105.50px;width:802.70px;height:1.20px;background:#b9cff0;"></div><div style="position:absolute;left:80.60px;top:121.30px;width:802.70px;height:499.30px;background:linear-gradient(#a4bfe8 0%,#98b5e2 10%,#86a6d8 25%,#7596cd 42%,#6587c1 58%,#567cb7 71%,#5278b4 78%,#5a81c0 89%,#6b93d5 100%);"></div><svg style="position:absolute;left:96.00px;top:121.30px;" width="420" height="120" viewBox="0 0 420 120"><defs><linearGradient id="sw" x1="0" y1="0" x2="1" y2="0"><stop offset="0" stop-color="#fff" stop-opacity=".2"/><stop offset=".55" stop-color="#fff" stop-opacity=".12"/><stop offset="1" stop-color="#fff" stop-opacity="0"/></linearGradient></defs><path d="M0 0 H420 C200 0 70 14 0 60Z" fill="url(#sw)"/></svg><div style="position:absolute;left:80.60px;top:121.30px;width:15.20px;height:499.30px;background:linear-gradient(#a9c4ec,#a0bde8 50%,#9ab8e6);"></div><div style="position:absolute;left:84.40px;top:108.40px;width:9.40px;height:9.60px;border:1px solid #c3d6f2;background:linear-gradient(#dbe7f8,#b9cff0);border-radius:1px"></div><div style="position:absolute;left:87.80px;top:111.80px;width:1.00px;height:3.20px;background:#5a6a90"></div><div style="position:absolute;left:87.80px;top:114.20px;width:2.80px;height:1.00px;background:#5a6a90"></div><div style="position:absolute;left:80.60px;top:105.50px;width:15.40px;height:16.20px;border-right:1px solid #c0d4f2;border-bottom:1px solid #c0d4f2;"></div><div style="position:absolute;left:234.60px;top:110.00px;width:498.60px;height:8.50px;background:#bdd2f0;"></div><div style="position:absolute;left:305.60px;top:110.00px;width:392.00px;height:8.50px;background:#fff;"></div><div style="position:absolute;top:110.39px;height:8.32px;line-height:8.32px;font-size:6.4px;color:#3f4f74;font-weight:400;font-family:'Liberation Sans';white-space:nowrap;;left:81.90px;width:400px;text-align:center;">1</div><div style="position:absolute;top:110.39px;height:8.32px;line-height:8.32px;font-size:6.4px;color:#3f4f74;font-weight:400;font-family:'Liberation Sans';white-space:nowrap;;left:58.20px;width:400px;text-align:center;">2</div><div style="position:absolute;top:110.39px;height:8.32px;line-height:8.32px;font-size:6.4px;color:#3f4f74;font-weight:400;font-family:'Liberation Sans';white-space:nowrap;;left:36.60px;width:400px;text-align:center;">3</div><div style="position:absolute;top:110.39px;height:8.32px;line-height:8.32px;font-size:6.4px;color:#3f4f74;font-weight:400;font-family:'Liberation Sans';white-space:nowrap;;left:129.30px;width:400px;text-align:center;">1</div><div style="position:absolute;top:110.39px;height:8.32px;line-height:8.32px;font-size:6.4px;color:#3f4f74;font-weight:400;font-family:'Liberation Sans';white-space:nowrap;;left:153.00px;width:400px;text-align:center;">2</div><div style="position:absolute;top:110.39px;height:8.32px;line-height:8.32px;font-size:6.4px;color:#3f4f74;font-weight:400;font-family:'Liberation Sans';white-space:nowrap;;left:176.70px;width:400px;text-align:center;">3</div><div style="position:absolute;top:110.39px;height:8.32px;line-height:8.32px;font-size:6.4px;color:#3f4f74;font-weight:400;font-family:'Liberation Sans';white-space:nowrap;;left:200.40px;width:400px;text-align:center;">4</div><div style="position:absolute;top:110.39px;height:8.32px;line-height:8.32px;font-size:6.4px;color:#3f4f74;font-weight:400;font-family:'Liberation Sans';white-space:nowrap;;left:224.10px;width:400px;text-align:center;">5</div><div style="position:absolute;top:110.39px;height:8.32px;line-height:8.32px;font-size:6.4px;color:#3f4f74;font-weight:400;font-family:'Liberation Sans';white-space:nowrap;;left:247.80px;width:400px;text-align:center;">6</div><div style="position:absolute;top:110.39px;height:8.32px;line-height:8.32px;font-size:6.4px;color:#3f4f74;font-weight:400;font-family:'Liberation Sans';white-space:nowrap;;left:271.50px;width:400px;text-align:center;">7</div><div style="position:absolute;top:110.39px;height:8.32px;line-height:8.32px;font-size:6.4px;color:#3f4f74;font-weight:400;font-family:'Liberation Sans';white-space:nowrap;;left:295.20px;width:400px;text-align:center;">8</div><div style="position:absolute;top:110.39px;height:8.32px;line-height:8.32px;font-size:6.4px;color:#3f4f74;font-weight:400;font-family:'Liberation Sans';white-space:nowrap;;left:318.90px;width:400px;text-align:center;">9</div><div style="position:absolute;top:110.39px;height:8.32px;line-height:8.32px;font-size:6.4px;color:#3f4f74;font-weight:400;font-family:'Liberation Sans';white-space:nowrap;;left:342.60px;width:400px;text-align:center;">10</div><div style="position:absolute;top:110.39px;height:8.32px;line-height:8.32px;font-size:6.4px;color:#3f4f74;font-weight:400;font-family:'Liberation Sans';white-space:nowrap;;left:366.30px;width:400px;text-align:center;">11</div><div style="position:absolute;top:110.39px;height:8.32px;line-height:8.32px;font-size:6.4px;color:#3f4f74;font-weight:400;font-family:'Liberation Sans';white-space:nowrap;;left:390.00px;width:400px;text-align:center;">12</div><div style="position:absolute;top:110.39px;height:8.32px;line-height:8.32px;font-size:6.4px;color:#3f4f74;font-weight:400;font-family:'Liberation Sans';white-space:nowrap;;left:413.70px;width:400px;text-align:center;">13</div><div style="position:absolute;top:110.39px;height:8.32px;line-height:8.32px;font-size:6.4px;color:#3f4f74;font-weight:400;font-family:'Liberation Sans';white-space:nowrap;;left:437.40px;width:400px;text-align:center;">14</div><div style="position:absolute;top:110.39px;height:8.32px;line-height:8.32px;font-size:6.4px;color:#3f4f74;font-weight:400;font-family:'Liberation Sans';white-space:nowrap;;left:461.10px;width:400px;text-align:center;">15</div><div style="position:absolute;top:110.39px;height:8.32px;line-height:8.32px;font-size:6.4px;color:#3f4f74;font-weight:400;font-family:'Liberation Sans';white-space:nowrap;;left:484.80px;width:400px;text-align:center;">16</div><div style="position:absolute;top:110.39px;height:8.32px;line-height:8.32px;font-size:6.4px;color:#3f4f74;font-weight:400;font-family:'Liberation Sans';white-space:nowrap;;left:508.50px;width:400px;text-align:center;">17</div><div style="position:absolute;left:245.95px;top:112.80px;width:0.90px;height:2.60px;background:#6c7c9c"></div><div style="position:absolute;left:269.65px;top:112.80px;width:0.90px;height:2.60px;background:#6c7c9c"></div><div style="position:absolute;left:293.35px;top:112.80px;width:0.90px;height:2.60px;background:#6c7c9c"></div><div style="position:absolute;left:317.05px;top:112.80px;width:0.90px;height:2.60px;background:#6c7c9c"></div><div style="position:absolute;left:340.75px;top:112.80px;width:0.90px;height:2.60px;background:#6c7c9c"></div><div style="position:absolute;left:364.45px;top:112.80px;width:0.90px;height:2.60px;background:#6c7c9c"></div><div style="position:absolute;left:388.15px;top:112.80px;width:0.90px;height:2.60px;background:#6c7c9c"></div><div style="position:absolute;left:411.85px;top:112.80px;width:0.90px;height:2.60px;background:#6c7c9c"></div><div style="position:absolute;left:435.55px;top:112.80px;width:0.90px;height:2.60px;background:#6c7c9c"></div><div style="position:absolute;left:459.25px;top:112.80px;width:0.90px;height:2.60px;background:#6c7c9c"></div><div style="position:absolute;left:482.95px;top:112.80px;width:0.90px;height:2.60px;background:#6c7c9c"></div><div style="position:absolute;left:506.65px;top:112.80px;width:0.90px;height:2.60px;background:#6c7c9c"></div><div style="position:absolute;left:530.35px;top:112.80px;width:0.90px;height:2.60px;background:#6c7c9c"></div><div style="position:absolute;left:554.05px;top:112.80px;width:0.90px;height:2.60px;background:#6c7c9c"></div><div style="position:absolute;left:577.75px;top:112.80px;width:0.90px;height:2.60px;background:#6c7c9c"></div><div style="position:absolute;left:601.45px;top:112.80px;width:0.90px;height:2.60px;background:#6c7c9c"></div><div style="position:absolute;left:625.15px;top:112.80px;width:0.90px;height:2.60px;background:#6c7c9c"></div><div style="position:absolute;left:648.85px;top:112.80px;width:0.90px;height:2.60px;background:#6c7c9c"></div><div style="position:absolute;left:672.55px;top:112.80px;width:0.90px;height:2.60px;background:#6c7c9c"></div><div style="position:absolute;left:696.25px;top:112.80px;width:0.90px;height:2.60px;background:#6c7c9c"></div><div style="position:absolute;left:719.95px;top:112.80px;width:0.90px;height:2.60px;background:#6c7c9c"></div><div style="position:absolute;left:240.03px;top:113.60px;width:0.90px;height:1.00px;background:#7e8dab"></div><div style="position:absolute;left:251.88px;top:113.60px;width:0.90px;height:1.00px;background:#7e8dab"></div><div style="position:absolute;left:263.73px;top:113.60px;width:0.90px;height:1.00px;background:#7e8dab"></div><div style="position:absolute;left:275.58px;top:113.60px;width:0.90px;height:1.00px;background:#7e8dab"></div><div style="position:absolute;left:287.43px;top:113.60px;width:0.90px;height:1.00px;background:#7e8dab"></div><div style="position:absolute;left:299.28px;top:113.60px;width:0.90px;height:1.00px;background:#7e8dab"></div><div style="position:absolute;left:311.13px;top:113.60px;width:0.90px;height:1.00px;background:#7e8dab"></div><div style="position:absolute;left:322.98px;top:113.60px;width:0.90px;height:1.00px;background:#7e8dab"></div><div style="position:absolute;left:334.83px;top:113.60px;width:0.90px;height:1.00px;background:#7e8dab"></div><div style="position:absolute;left:346.68px;top:113.60px;width:0.90px;height:1.00px;background:#7e8dab"></div><div style="position:absolute;left:358.53px;top:113.60px;width:0.90px;height:1.00px;background:#7e8dab"></div><div style="position:absolute;left:370.38px;top:113.60px;width:0.90px;height:1.00px;background:#7e8dab"></div><div style="position:absolute;left:382.23px;top:113.60px;width:0.90px;height:1.00px;background:#7e8dab"></div><div style="position:absolute;left:394.08px;top:113.60px;width:0.90px;height:1.00px;background:#7e8dab"></div><div style="position:absolute;left:405.93px;top:113.60px;width:0.90px;height:1.00px;background:#7e8dab"></div><div style="position:absolute;left:417.78px;top:113.60px;width:0.90px;height:1.00px;background:#7e8dab"></div><div style="position:absolute;left:429.63px;top:113.60px;width:0.90px;height:1.00px;background:#7e8dab"></div><div style="position:absolute;left:441.48px;top:113.60px;width:0.90px;height:1.00px;background:#7e8dab"></div><div style="position:absolute;left:453.33px;top:113.60px;width:0.90px;height:1.00px;background:#7e8dab"></div><div style="position:absolute;left:465.18px;top:113.60px;width:0.90px;height:1.00px;background:#7e8dab"></div><div style="position:absolute;left:477.03px;top:113.60px;width:0.90px;height:1.00px;background:#7e8dab"></div><div style="position:absolute;left:488.88px;top:113.60px;width:0.90px;height:1.00px;background:#7e8dab"></div><div style="position:absolute;left:500.73px;top:113.60px;width:0.90px;height:1.00px;background:#7e8dab"></div><div style="position:absolute;left:512.58px;top:113.60px;width:0.90px;height:1.00px;background:#7e8dab"></div><div style="position:absolute;left:524.43px;top:113.60px;width:0.90px;height:1.00px;background:#7e8dab"></div><div style="position:absolute;left:536.27px;top:113.60px;width:0.90px;height:1.00px;background:#7e8dab"></div><div style="position:absolute;left:548.12px;top:113.60px;width:0.90px;height:1.00px;background:#7e8dab"></div><div style="position:absolute;left:559.98px;top:113.60px;width:0.90px;height:1.00px;background:#7e8dab"></div><div style="position:absolute;left:571.83px;top:113.60px;width:0.90px;height:1.00px;background:#7e8dab"></div><div style="position:absolute;left:583.68px;top:113.60px;width:0.90px;height:1.00px;background:#7e8dab"></div><div style="position:absolute;left:595.52px;top:113.60px;width:0.90px;height:1.00px;background:#7e8dab"></div><div style="position:absolute;left:607.38px;top:113.60px;width:0.90px;height:1.00px;background:#7e8dab"></div><div style="position:absolute;left:619.23px;top:113.60px;width:0.90px;height:1.00px;background:#7e8dab"></div><div style="position:absolute;left:631.08px;top:113.60px;width:0.90px;height:1.00px;background:#7e8dab"></div><div style="position:absolute;left:642.93px;top:113.60px;width:0.90px;height:1.00px;background:#7e8dab"></div><div style="position:absolute;left:654.77px;top:113.60px;width:0.90px;height:1.00px;background:#7e8dab"></div><div style="position:absolute;left:666.63px;top:113.60px;width:0.90px;height:1.00px;background:#7e8dab"></div><div style="position:absolute;left:678.48px;top:113.60px;width:0.90px;height:1.00px;background:#7e8dab"></div><div style="position:absolute;left:690.33px;top:113.60px;width:0.90px;height:1.00px;background:#7e8dab"></div><div style="position:absolute;left:702.18px;top:113.60px;width:0.90px;height:1.00px;background:#7e8dab"></div><div style="position:absolute;left:714.02px;top:113.60px;width:0.90px;height:1.00px;background:#7e8dab"></div><div style="position:absolute;left:725.88px;top:113.60px;width:0.90px;height:1.00px;background:#7e8dab"></div><svg style="position:absolute;left:301.80px;top:110.00px;" width="8" height="12" viewBox="0 0 8 12"><path d="M4 0.6 L7.2 3.8 V6.6 H0.8 V3.8Z" fill="#eef3fb" stroke="#7f92b8" stroke-width=".7"/><rect x="0.8" y="7.2" width="6.4" height="3.6" fill="#eef3fb" stroke="#7f92b8" stroke-width=".7"/></svg><svg style="position:absolute;left:331.40px;top:107.20px;" width="8" height="7" viewBox="0 0 8 7"><path d="M0.8 0.6 H7.2 V3 L4 6.2 L0.8 3Z" fill="#eef3fb" stroke="#7f92b8" stroke-width=".7"/></svg><div style="position:absolute;left:330.20px;top:113.20px;width:1.40px;height:4.60px;background:#333"></div><div style="position:absolute;left:330.20px;top:116.60px;width:3.40px;height:1.40px;background:#333"></div><div style="position:absolute;left:335.60px;top:113.20px;width:1.40px;height:4.60px;background:#333"></div><div style="position:absolute;left:335.60px;top:116.60px;width:3.40px;height:1.40px;background:#333"></div><svg style="position:absolute;left:693.40px;top:111.40px;" width="8" height="7" viewBox="0 0 8 7"><path d="M4 0.6 L7.2 3.8 V6.4 H0.8 V3.8Z" fill="#eef3fb" stroke="#7f92b8" stroke-width=".7"/></svg><div style="position:absolute;left:236.20px;top:122.50px;width:498.30px;height:330.70px;background:rgba(40,62,115,.55);"></div><div style="position:absolute;left:236.50px;top:452.00px;width:497.60px;height:1.80px;background:linear-gradient(rgba(30,50,100,.75),rgba(30,50,100,.25));"></div><div style="position:absolute;left:235.00px;top:121.30px;width:498.30px;height:330.70px;background:#fff;"></div><div style="position:absolute;left:236.20px;top:462.20px;width:498.30px;height:158.40px;background:rgba(40,62,115,.55);"></div><div style="position:absolute;left:235.00px;top:461.00px;width:498.30px;height:159.60px;background:#fff;"></div><div class="dl" style="position:absolute;left:336.60px;top:119.50px;height:15px;line-height:15px;white-space:nowrap;letter-spacing:0px;">1.</div><svg style="position:absolute;left:344.60px;top:125.80px;" width="5.4" height="3.6" viewBox="0 0 5.4 3.6"><path d="M0 1.8H4.4M2.6 .2L4.6 1.8L2.6 3.4" stroke="#333" stroke-width=".8" fill="none"/></svg><div class="dl" style="position:absolute;left:351.40px;top:119.50px;width:346.20px;height:15px;line-height:15px;text-align:justify;text-align-last:justify;white-space:normal;overflow:visible;">Формування<i class="d"></i> стійкого<i class="d"></i> інтересу<i class="d"></i> до<i class="d"></i> професійної<i class="d"></i> діяльності<i class="d"></i> викладача</div><div style="position:absolute;left:698.40px;top:126.80px;width:1.00px;height:1.00px;background:#555;border-radius:50%"></div><div class="dl" style="position:absolute;left:351.40px;top:135.02px;width:346.20px;height:15px;line-height:15px;text-align:justify;text-align-last:justify;white-space:normal;overflow:visible;">закладу<i class="d"></i> вищої<i class="d"></i> освіти<i class="d"></i> з<i class="d"></i> відповідними<i class="d"></i> <u class="sq">soft</u><i class="d"></i> <u class="sq">skills</u><i class="d"></i> <u class="sq">навчивами</u>,<i class="d"></i> зі</div><div style="position:absolute;left:698.40px;top:142.32px;width:1.00px;height:1.00px;background:#555;border-radius:50%"></div><div class="dl" style="position:absolute;left:351.40px;top:150.54px;width:346.20px;height:15px;line-height:15px;text-align:justify;text-align-last:justify;white-space:normal;overflow:visible;">здатністю<i class="d"></i> до<i class="d"></i> безперервного<i class="d"></i> саморозвитку<i class="d"></i> і<i class="d"></i> самовдосконалення,</div><div style="position:absolute;left:698.40px;top:157.84px;width:1.00px;height:1.00px;background:#555;border-radius:50%"></div><div class="dl" style="position:absolute;left:351.40px;top:166.06px;width:346.20px;height:15px;line-height:15px;text-align:justify;text-align-last:justify;white-space:normal;overflow:visible;">відповідальністю<i class="d"></i> за<i class="d"></i> навчання<i class="d"></i> різних<i class="d"></i> категорій<i class="d"></i> громадян<i class="d"></i> на<i class="d"></i> засадах</div><div style="position:absolute;left:698.40px;top:173.36px;width:1.00px;height:1.00px;background:#555;border-radius:50%"></div><div class="dl" style="position:absolute;left:351.40px;top:181.58px;height:15px;line-height:15px;white-space:nowrap;letter-spacing:0px;">професійної<i class="d"></i> етики,<i class="d"></i> принципів<i class="d"></i> академічної<i class="d"></i> доброчесності.<b class="pm">¶</b></div><div class="dl" style="position:absolute;left:336.60px;top:197.10px;height:15px;line-height:15px;white-space:nowrap;letter-spacing:0px;">2.</div><svg style="position:absolute;left:344.60px;top:203.40px;" width="5.4" height="3.6" viewBox="0 0 5.4 3.6"><path d="M0 1.8H4.4M2.6 .2L4.6 1.8L2.6 3.4" stroke="#333" stroke-width=".8" fill="none"/></svg><div class="dl" style="position:absolute;left:351.40px;top:197.10px;width:346.20px;height:15px;line-height:15px;text-align:justify;text-align-last:justify;white-space:normal;overflow:visible;">Удосконалення<i class="d"></i> основ<i class="d"></i> науково-методичної<i class="d"></i> та<i class="d"></i> навчально-методичної</div><div style="position:absolute;left:698.40px;top:204.40px;width:1.00px;height:1.00px;background:#555;border-radius:50%"></div><div class="dl" style="position:absolute;left:351.40px;top:212.62px;height:15px;line-height:15px;white-space:nowrap;letter-spacing:0px;">роботи<i class="d"></i> у<i class="d"></i> межах<i class="d"></i> спеціальності<i class="d"></i> 016<i class="d"></i> Спеціальна<i class="d"></i> освіта<b class="pm">¶</b></div><div class="dl" style="position:absolute;left:336.60px;top:228.14px;height:15px;line-height:15px;white-space:nowrap;letter-spacing:0px;">3.</div><svg style="position:absolute;left:344.60px;top:234.44px;" width="5.4" height="3.6" viewBox="0 0 5.4 3.6"><path d="M0 1.8H4.4M2.6 .2L4.6 1.8L2.6 3.4" stroke="#333" stroke-width=".8" fill="none"/></svg><div class="dl" style="position:absolute;left:351.40px;top:228.14px;width:346.20px;height:15px;line-height:15px;text-align:justify;text-align-last:justify;white-space:normal;overflow:visible;">Розширення<i class="d"></i> спектру<i class="d"></i> та<i class="d"></i> удосконалення<i class="d"></i> навичок<i class="d"></i> використання</div><div style="position:absolute;left:698.40px;top:235.44px;width:1.00px;height:1.00px;background:#555;border-radius:50%"></div><div class="dl" style="position:absolute;left:351.40px;top:243.66px;width:346.20px;height:15px;line-height:15px;text-align:justify;text-align-last:justify;white-space:normal;overflow:visible;">різноманітних<i class="d"></i> освітніх<i class="d"></i> технологій<i class="d"></i> для<i class="d"></i> проведення<i class="d"></i> навчальних</div><div style="position:absolute;left:698.40px;top:250.96px;width:1.00px;height:1.00px;background:#555;border-radius:50%"></div><div class="dl" style="position:absolute;left:351.40px;top:259.18px;width:346.20px;height:15px;line-height:15px;text-align:justify;text-align-last:justify;white-space:normal;overflow:visible;">занять<i class="d"></i> зі<i class="d"></i> здобувачами<i class="d"></i> освіти<i class="d"></i> другого<i class="d"></i> рівня<i class="d"></i> вищої<i class="d"></i> освіти<i class="d"></i> зі</div><div style="position:absolute;left:698.40px;top:266.48px;width:1.00px;height:1.00px;background:#555;border-radius:50%"></div><div class="dl" style="position:absolute;left:351.40px;top:274.70px;height:15px;line-height:15px;white-space:nowrap;letter-spacing:0px;">спеціальності<i class="d"></i> 016<i class="d"></i> Спеціальна<i class="d"></i> освіта.<b class="pm">¶</b></div><div class="dl" style="position:absolute;left:336.60px;top:290.22px;height:15px;line-height:15px;white-space:nowrap;letter-spacing:0px;">4.</div><svg style="position:absolute;left:344.60px;top:296.52px;" width="5.4" height="3.6" viewBox="0 0 5.4 3.6"><path d="M0 1.8H4.4M2.6 .2L4.6 1.8L2.6 3.4" stroke="#333" stroke-width=".8" fill="none"/></svg><div class="dl" style="position:absolute;left:351.40px;top:290.22px;width:346.20px;height:15px;line-height:15px;text-align:justify;text-align-last:justify;white-space:normal;overflow:visible;">Удосконалення<i class="d"></i> навичок<i class="d"></i> структурування<i class="d"></i> і<i class="d"></i> представлення</div><div style="position:absolute;left:698.40px;top:297.52px;width:1.00px;height:1.00px;background:#555;border-radius:50%"></div><div class="dl" style="position:absolute;left:351.40px;top:305.74px;width:346.20px;height:15px;line-height:15px;text-align:justify;text-align-last:justify;white-space:normal;overflow:visible;">навчального<i class="d"></i> матеріалу,<i class="d"></i> активізації<i class="d"></i> навчальної<i class="d"></i> діяльності,</div><div style="position:absolute;left:698.40px;top:313.04px;width:1.00px;height:1.00px;background:#555;border-radius:50%"></div><div class="dl" style="position:absolute;left:351.40px;top:321.26px;height:15px;line-height:15px;white-space:nowrap;letter-spacing:0px;">особливостей<i class="d"></i> професійної<i class="d"></i> риторики.<i class="d"></i> <b class="pm">¶</b></div><div class="dl" style="position:absolute;left:336.60px;top:336.78px;height:15px;line-height:15px;white-space:nowrap;letter-spacing:0px;">5.</div><svg style="position:absolute;left:344.60px;top:343.08px;" width="5.4" height="3.6" viewBox="0 0 5.4 3.6"><path d="M0 1.8H4.4M2.6 .2L4.6 1.8L2.6 3.4" stroke="#333" stroke-width=".8" fill="none"/></svg><div class="dl" style="position:absolute;left:351.40px;top:336.78px;width:346.20px;height:15px;line-height:15px;text-align:justify;text-align-last:justify;white-space:normal;overflow:visible;">Удосконалення<i class="d"></i> навичок<i class="d"></i> оцінювання<i class="d"></i> освітньої<i class="d"></i> діяльності<i class="d"></i> у<i class="d"></i> закладі</div><div style="position:absolute;left:698.40px;top:344.08px;width:1.00px;height:1.00px;background:#555;border-radius:50%"></div><div class="dl" style="position:absolute;left:351.40px;top:352.30px;height:15px;line-height:15px;white-space:nowrap;letter-spacing:0px;">вищої<i class="d"></i> освіти.<b class="pm">¶</b></div><div class="dl" style="position:absolute;left:351.40px;top:367.82px;height:15px;line-height:15px;white-space:nowrap;letter-spacing:0px;"><b class="pm">¶</b></div><div style="position:absolute;left:306.00px;top:391.24px;width:31.00px;height:1.00px;background:repeating-linear-gradient(90deg,#777 0 1px,transparent 1px 2.4px);"></div><div style="position:absolute;top:387.17px;height:8.84px;line-height:8.84px;font-size:6.8px;color:#555;font-weight:400;font-family:'Liberation Sans';white-space:nowrap;letter-spacing:.28px;left:336.40px;">Разрыв страницы</div><div style="position:absolute;left:396.40px;top:391.24px;width:29.00px;height:1.00px;background:repeating-linear-gradient(90deg,#777 0 1px,transparent 1px 2.4px);"></div><div class="dl" style="position:absolute;left:426.20px;top:382.74px;height:15px;line-height:15px;white-space:nowrap;letter-spacing:0px;"><b class="pm">¶</b></div><div class="dl" style="position:absolute;left:335.40px;top:507.80px;width:362.20px;height:15px;line-height:15px;text-align:justify;text-align-last:justify;white-space:normal;overflow:visible;">Відповідно<i class="d"></i> до<i class="d"></i> освітньо-наукової<i class="d"></i> програми<i class="d"></i> спеціальності<i class="d"></i> 016</div><div style="position:absolute;left:698.40px;top:515.10px;width:1.00px;height:1.00px;background:#555;border-radius:50%"></div><div class="dl" style="position:absolute;left:306.20px;top:523.50px;width:391.40px;height:15px;line-height:15px;text-align:justify;text-align-last:justify;white-space:normal;overflow:visible;">Спеціальна<i class="d"></i> освіта<i class="d"></i> за<i class="d"></i> третім<i class="d"></i> (<u class="sq">освітньо-науковим</u>)<i class="d"></i> рівнем<i class="d"></i> вищої<i class="d"></i> освіти<i class="d"></i> (доктор</div><div style="position:absolute;left:698.40px;top:530.80px;width:1.00px;height:1.00px;background:#555;border-radius:50%"></div><div class="dl" style="position:absolute;left:306.20px;top:539.30px;width:391.40px;height:15px;line-height:15px;text-align:justify;text-align-last:justify;white-space:normal;overflow:visible;">філософії)<i class="d"></i> у<i class="d"></i> аспірантів<i class="d"></i> необхідно<i class="d"></i> сформувати<i class="d"></i> загальні<i class="d"></i> і<i class="d"></i> спеціальні<i class="d"></i> (фахові)</div><div style="position:absolute;left:698.40px;top:546.60px;width:1.00px;height:1.00px;background:#555;border-radius:50%"></div><div class="dl" style="position:absolute;left:306.20px;top:555.10px;height:15px;line-height:15px;white-space:nowrap;letter-spacing:0px;">компетентності,<i class="d"></i> зокрема<i class="d"></i> такі:<b class="pm">¶</b></div><div style="position:absolute;left:301.00px;top:570.20px;width:400.80px;height:16.80px;background:#d9d9d9;border:1px solid #505050;"></div><div style="position:absolute;left:301.00px;top:586.20px;width:400.80px;height:36.00px;border:1px solid #505050;border-bottom:none;"></div><div style="position:absolute;left:399.20px;top:586.20px;width:1.00px;height:36.00px;background:#505050;"></div><div class="dl" style="position:absolute;left:301px;top:570.4px;width:400.8px;height:15px;line-height:15px;text-align:center;font-weight:700;white-space:nowrap;letter-spacing:.18px"><u class="sq">Програмні</u><i class="d"></i> <u class="sq">компетентності</u><span style="font-weight:400;font-size:8px">¤</span></div><div style="position:absolute;top:573.92px;height:8.45px;line-height:8.45px;font-size:6.5px;color:#333;font-weight:400;font-family:'Liberation Serif';white-space:nowrap;;left:703.60px;">¤</div><div style="position:absolute;top:590.32px;height:8.45px;line-height:8.45px;font-size:6.5px;color:#333;font-weight:400;font-family:'Liberation Serif';white-space:nowrap;;left:703.60px;">¤</div><div class="dl" style="position:absolute;left:306.20px;top:586.50px;height:15px;line-height:15px;white-space:nowrap;letter-spacing:0px;font-weight:700;"><u class="sq">Інтегральна</u>¶</div><div class="dl" style="position:absolute;left:306.20px;top:602.30px;height:15px;line-height:15px;white-space:nowrap;letter-spacing:0px;font-weight:700;"><u class="sq">компетентність</u>¶</div><div class="dl" style="position:absolute;left:430.20px;top:586.50px;width:267.40px;height:15px;line-height:15px;text-align:justify;text-align-last:justify;white-space:normal;overflow:visible;">Здатність<i class="d"></i> розв’язувати<i class="d"></i> комплексні<i class="d"></i> проблеми<i class="d"></i> у</div><div style="position:absolute;left:698.40px;top:593.80px;width:1.00px;height:1.00px;background:#555;border-radius:50%"></div><div class="dl" style="position:absolute;left:405.00px;top:602.30px;width:292.60px;height:15px;line-height:15px;text-align:justify;text-align-last:justify;white-space:normal;overflow:visible;">професійній<i class="d"></i> та/або<i class="d"></i> дослідницько-інноваційній<i class="d"></i> діяльності,</div><div style="position:absolute;left:698.40px;top:609.60px;width:1.00px;height:1.00px;background:#555;border-radius:50%"></div><div style="position:absolute;left:872.60px;top:105.50px;width:10.70px;height:16.00px;background:#9cbae4;"></div><div style="position:absolute;left:872.60px;top:121.30px;width:10.70px;height:467.40px;background:linear-gradient(90deg,#a2bce6 0,#809fd4 16%,#7896ce 50%,#7d9cd2 100%);"></div><div style="position:absolute;left:875.80px;top:107.60px;width:4.80px;height:1.30px;background:#5876b6"></div><div style="position:absolute;left:873.20px;top:111.00px;width:9.50px;height:8.80px;background:linear-gradient(#f1f6fc,#cfdff5);border:1px solid #9db5de;border-radius:1px"></div><div style="position:absolute;left:875.20px;top:113.40px;width:5.40px;height:3.60px;border:1px solid #5a6f9c;background:#fff"></div><div style="position:absolute;left:873.20px;top:122.00px;width:9.50px;height:8.90px;background:linear-gradient(90deg,#eef4fc,#cbdcf4);border:1px solid #9db5de;border-radius:1px"></div><div style="position:absolute;left:876.00px;top:125.20px;width:3.80px;height:2.60px;background:#3c4f80;clip-path:polygon(50% 0,100% 100%,0 100%)"></div><div style="position:absolute;left:873.20px;top:192.40px;width:9.50px;height:10.40px;background:linear-gradient(90deg,#f4f8fd,#cfdff5);border:1px solid #9db5de;border-radius:2px"></div><div style="position:absolute;left:875.60px;top:195.60px;width:4.80px;height:0.90px;background:#8aa0c8"></div><div style="position:absolute;left:875.60px;top:197.40px;width:4.80px;height:0.90px;background:#8aa0c8"></div><div style="position:absolute;left:875.60px;top:199.20px;width:4.80px;height:0.90px;background:#8aa0c8"></div><div style="position:absolute;left:872.70px;top:588.60px;width:10.60px;height:32.00px;background:#a7c1ed;"></div><div style="position:absolute;left:873.40px;top:578.80px;width:8.80px;height:9.80px;background:linear-gradient(#f3f7fd,#dbe7f9);border:1px solid #c0d3f0;border-radius:1px"></div><div style="position:absolute;left:875.90px;top:582.60px;width:3.80px;height:2.60px;background:#3c4f80;clip-path:polygon(0 0,100% 0,50% 100%)"></div><div style="position:absolute;left:875.90px;top:592.00px;width:4.00px;height:2.40px;background:#1b2a58;clip-path:polygon(50% 0,100% 100%,0 100%)"></div><div style="position:absolute;left:875.90px;top:594.40px;width:4.00px;height:2.40px;background:#1b2a58;clip-path:polygon(50% 0,100% 100%,0 100%)"></div><div style="position:absolute;left:875.60px;top:602.00px;width:4.60px;height:4.60px;background:radial-gradient(circle at 40% 35%,#f4efe0,#b9b39c 60%,#7d8290);border-radius:50%"></div><div style="position:absolute;left:875.90px;top:611.60px;width:4.00px;height:2.40px;background:#1b2a58;clip-path:polygon(0 0,100% 0,50% 100%)"></div><div style="position:absolute;left:875.90px;top:614.00px;width:4.00px;height:2.40px;background:#1b2a58;clip-path:polygon(0 0,100% 0,50% 100%)"></div><svg style="position:absolute;left:877.40px;top:581.40px;" width="8" height="12" viewBox="0 0 8 12"><path d="M.6 .4V9.4L2.8 7.4L4.4 11L5.8 10.4L4.2 6.8L7 6.6Z" fill="#fff" stroke="#333" stroke-width=".6"/></svg><div style="position:absolute;left:80.60px;top:620.60px;width:802.70px;height:14.20px;background:linear-gradient(#d5e4f9 0%,#c3d8f5 45%,#a9c6ef 55%,#b9d1f3 100%);"></div><div style="position:absolute;top:623.53px;height:9.04px;line-height:9.04px;font-size:6.95px;color:#3b5488;font-weight:400;font-family:'Liberation Sans';white-space:nowrap;;left:86.20px;">Страница: 4 из 27</div><div style="position:absolute;left:149.60px;top:622.40px;width:1.00px;height:10.00px;background:#9db8e2"></div><div style="position:absolute;top:623.63px;height:8.84px;line-height:8.84px;font-size:6.8px;color:#3b5488;font-weight:400;font-family:'Liberation Sans';white-space:nowrap;;left:155.80px;">Число слов: 4 644</div><div style="position:absolute;left:219.40px;top:622.40px;width:1.00px;height:10.00px;background:#9db8e2"></div><svg style="position:absolute;left:224.60px;top:622.20px;" width="10" height="10" viewBox="0 0 10 10"><path d="M1 4 L5 3 L9 4 L9 8 L5 9.4 L1 8Z" fill="#f6f8fc" stroke="#7f8fb0" stroke-width=".7"/><path d="M5 .8L8.4 4.4M8.4 .8L5 4.4" stroke="#d8382c" stroke-width="1.2"/></svg><div style="position:absolute;top:623.33px;height:9.43px;line-height:9.43px;font-size:7.25px;color:#3b5488;font-weight:400;font-family:'Liberation Sans';white-space:nowrap;;left:245.70px;">Украинский (Украина)</div><div style="position:absolute;left:324.60px;top:622.40px;width:1.00px;height:10.00px;background:#9db8e2"></div><div style="position:absolute;left:710.60px;top:621.60px;width:57.20px;height:11.80px;border:1px solid #9db8e2;border-radius:2px;background:linear-gradient(#e4eefb,#c6daf4);"></div><div style="position:absolute;left:710.80px;top:621.80px;width:11.40px;height:11.40px;border:1px solid #d9a24a;border-radius:2px;background:linear-gradient(#fbd48a,#f7b24a 55%,#fbcf7c);"></div><div style="position:absolute;left:713.00px;top:623.80px;width:6.80px;height:7.20px;background:#eef3fb;border:1px solid #8795b4;"></div><div style="position:absolute;left:714.60px;top:626.00px;width:3.80px;height:0.80px;background:#7f8ca8"></div><div style="position:absolute;left:714.60px;top:628.00px;width:3.80px;height:0.80px;background:#7f8ca8"></div><div style="position:absolute;left:724.30px;top:623.80px;width:6.80px;height:7.20px;background:#eef3fb;border:1px solid #8795b4;"></div><div style="position:absolute;left:725.90px;top:626.00px;width:3.80px;height:0.80px;background:#7f8ca8"></div><div style="position:absolute;left:725.90px;top:628.00px;width:3.80px;height:0.80px;background:#7f8ca8"></div><div style="position:absolute;left:735.60px;top:623.80px;width:6.80px;height:7.20px;background:#eef3fb;border:1px solid #8795b4;"></div><div style="position:absolute;left:737.20px;top:626.00px;width:3.80px;height:0.80px;background:#7f8ca8"></div><div style="position:absolute;left:737.20px;top:628.00px;width:3.80px;height:0.80px;background:#7f8ca8"></div><div style="position:absolute;left:746.90px;top:623.80px;width:6.80px;height:7.20px;background:#eef3fb;border:1px solid #8795b4;"></div><div style="position:absolute;left:748.50px;top:626.00px;width:3.80px;height:0.80px;background:#7f8ca8"></div><div style="position:absolute;left:748.50px;top:628.00px;width:3.80px;height:0.80px;background:#7f8ca8"></div><div style="position:absolute;left:758.20px;top:623.80px;width:6.80px;height:7.20px;background:#eef3fb;border:1px solid #8795b4;"></div><div style="position:absolute;left:759.80px;top:626.00px;width:3.80px;height:0.80px;background:#7f8ca8"></div><div style="position:absolute;left:759.80px;top:628.00px;width:3.80px;height:0.80px;background:#7f8ca8"></div><div style="position:absolute;left:736.60px;top:628.60px;width:4.00px;height:3.60px;background:#3c8e8a;border-radius:50%"></div><div style="position:absolute;top:623.66px;height:8.97px;line-height:8.97px;font-size:6.9px;color:#3b5488;font-weight:400;font-family:'Liberation Sans';white-space:nowrap;;left:773.60px;">100%</div><div style="position:absolute;left:806.00px;top:627.20px;width:64.00px;height:1.00px;background:#a9c0e6;opacity:.35"></div><div style="position:absolute;left:806.00px;top:628.20px;width:64.00px;height:1.00px;background:#dbe7f9;opacity:.35"></div><div style="position:absolute;left:796.70px;top:623.30px;width:8.40px;height:8.40px;border-radius:50%;border:1px solid #9db4dc;background:radial-gradient(circle at 40% 35%,#ffffff,#dbe7f8 70%,#c4d6f1);"></div><div style="position:absolute;left:870.80px;top:623.30px;width:8.40px;height:8.40px;border-radius:50%;border:1px solid #9db4dc;background:radial-gradient(circle at 40% 35%,#ffffff,#dbe7f8 70%,#c4d6f1);"></div><div style="position:absolute;left:798.90px;top:627.10px;width:4.00px;height:1.00px;background:#4a5f8e"></div><div style="position:absolute;left:873.00px;top:627.10px;width:4.00px;height:1.00px;background:#4a5f8e"></div><div style="position:absolute;left:874.50px;top:625.60px;width:1.00px;height:4.00px;background:#4a5f8e"></div><svg style="position:absolute;left:834.30px;top:622.60px;" width="6" height="10" viewBox="0 0 6 10"><path d="M.6 .6H5.4V6.2L3 9.2L.6 6.2Z" fill="#eef3fb" stroke="#7088b6" stroke-width=".8"/></svg>
</div></div>
<div id="zoomui">
<svg style="position:absolute;left:108.00px;top:316.00px;" width="26" height="40" viewBox="0 0 26 40"><path d="M20 4.6 L4.2 19.9 L20 35.2" fill="none" stroke="#ffffff" stroke-opacity=".62" stroke-width="2.6" stroke-linecap="round" stroke-linejoin="round"/></svg><div style="position:absolute;left:985.80px;top:313.60px;width:1.10px;height:24.80px;background:#8c8c8c;box-shadow:0 0 1px #777"></div><div style="position:absolute;left:988.40px;top:313.60px;width:1.10px;height:24.80px;background:#8c8c8c;box-shadow:0 0 1px #777"></div><div style="position:absolute;left:1086.60px;top:597.40px;width:69.00px;height:30.80px;background:#101010;border-radius:3.5px;"></div><svg style="position:absolute;left:1114.00px;top:608.60px;" width="14" height="10" viewBox="0 0 14 10"><path d="M1.6 2 L7 7.4 L12.4 2" fill="none" stroke="#b4b2c2" stroke-width="1.5"/></svg>
<div style="position:absolute;left:1046.60px;top:60.50px;width:149.30px;height:84.20px;background:#c4c4c1;"></div><svg style="position:absolute;left:1046.60px;top:60.50px;" width="149.3" height="84.2" viewBox="0 0 149.3 84.2">
<defs>
<filter id="b1" x="-20%" y="-20%" width="140%" height="140%"><feGaussianBlur stdDeviation="1.8"/></filter>
<filter id="b1s" x="-20%" y="-20%" width="140%" height="140%"><feGaussianBlur stdDeviation=".9"/></filter>
<linearGradient id="w1" x1="0" y1="0" x2=".62" y2=".55"><stop offset="0" stop-color="#aeaeac"/><stop offset=".3" stop-color="#c2c2bf"/><stop offset=".65" stop-color="#d4d4d0"/><stop offset="1" stop-color="#dddbd7"/></linearGradient>
<clipPath id="c1"><rect width="149.3" height="84.2"/></clipPath>
</defs>
<g clip-path="url(#c1)">
<rect width="149.3" height="84.2" fill="url(#w1)"/>
<g filter="url(#b1)">
<path d="M26 88 C44 68 60 62 80 54 L150 66 V90 H26Z" fill="#4160a4"/>
<path d="M78 30 C76 8 86 -6 107 -6 C128 -6 137 8 135 32 C134 52 126 70 108 72 C90 72 80 52 78 30Z" fill="#82757c"/>
<path d="M76 14 C80 -8 134 -8 138 16 C128 8 118 10 108 11 C96 10 86 8 76 14Z" fill="#363638"/>
<path d="M80 18 C86 12 98 14 106 22 C96 20 88 20 82 26Z" fill="#a0949a"/>
<ellipse cx="93" cy="44" rx="11" ry="10" fill="#a89ca2"/>
<ellipse cx="123" cy="42" rx="9" ry="14" fill="#5f525a"/>
<rect x="84" y="26" width="18" height="3.4" rx="1.6" fill="#4a4048"/>
<rect x="114" y="26" width="16" height="3.4" rx="1.6" fill="#40363e"/>
<rect x="88" y="34.6" width="13" height="2.6" rx="1.2" fill="#4e444c"/>
<rect x="116" y="35" width="12" height="2.6" rx="1.2" fill="#453b43"/>
<ellipse cx="108" cy="46" rx="5" ry="9" fill="#b5a6aa"/>
<ellipse cx="108" cy="60" rx="9" ry="3" fill="#6b5860"/>
<ellipse cx="107" cy="69" rx="18" ry="7" fill="#6a5a62"/>
</g>
<g filter="url(#b1s)" fill="none">
<path d="M70 24 C71 10 76 2 83 -4" stroke="#30323c" stroke-width="4.6"/>
<path d="M134 -4 C139 4 142 14 142 28" stroke="#2a2a30" stroke-width="4.6"/>
<rect x="65.2" y="21.6" width="12.4" height="28.6" rx="4.6" fill="#191a20"/>
<rect x="67.4" y="28" width="4" height="12" rx="2" fill="#3a4660"/>
<rect x="131.4" y="24.6" width="15" height="31" rx="6.4" fill="#17171b"/>
<path d="M134 54 L135.4 86" stroke="#26262a" stroke-width="1.3"/>
</g>
</g></svg><div style="position:absolute;left:1046.60px;top:126.20px;width:149.30px;height:18.50px;background:rgba(26,27,32,.76);"></div><svg style="position:absolute;left:1048.97px;top:128.06px;" width="13.3" height="14.3" viewBox="0 0 13 14"><g fill="#e04040" stroke="none"><rect x="4.2" y="1" width="4.6" height="7.6" rx="2.3"/><path d="M2.4 6 Q2.4 10.4 6.5 10.4 Q10.6 10.4 10.6 6" fill="none" stroke="#e04040" stroke-width="1.4"/><rect x="5.8" y="10.4" width="1.4" height="2"/><rect x="3.8" y="12" width="5.4" height="1.3"/></g><path d="M.8 13.2 L12 .8" stroke="#f04848" stroke-width="1.6"/></svg><svg style="position:absolute;left:1067.40px;top:129.20px;" width="10" height="13" viewBox="0 0 10 13"><path d="M2.6 .6H7.4L6.8 1.8V5.2C8.2 5.8 8.8 6.8 8.8 7.8H1.2C1.2 6.8 1.8 5.8 3.2 5.2V1.8Z" fill="#f4f4f4"/><rect x="4.5" y="7.8" width="1.1" height="4.4" fill="#f4f4f4"/></svg><div style="position:absolute;top:128.88px;height:15.54px;line-height:15.54px;font-size:11.95px;color:#f0f0f0;font-weight:400;font-family:'Liberation Sans';white-space:nowrap;;left:1084.00px;">Колишкін Олекса...</div><div style="position:absolute;left:1042.70px;top:146.20px;width:156.70px;height:90.80px;background:linear-gradient(#cfe857 0%,#bfe640 14%,#8edb22 32%,#63cf0f 50%,#8fdc3a 62%,#d6ec6a 78%,#f2f285 100%);border-radius:1.5px"></div><div style="position:absolute;left:1045.20px;top:146.20px;width:151.70px;height:4.20px;background:#d5ea5e;"></div><div style="position:absolute;left:1045.20px;top:233.20px;width:151.70px;height:3.80px;background:#f1f184;"></div><svg style="position:absolute;left:1047.00px;top:150.30px;" width="148.3" height="83" viewBox="0 0 148.3 83">
<defs>
<filter id="b2" x="-20%" y="-20%" width="140%" height="140%"><feGaussianBlur stdDeviation="2"/></filter>
<filter id="b2s" x="-20%" y="-20%" width="140%" height="140%"><feGaussianBlur stdDeviation=".8"/></filter>
<linearGradient id="w2" x1="0" y1="0" x2="1" y2="0"><stop offset="0" stop-color="#cbc1a8"/><stop offset=".35" stop-color="#c8c0aa"/><stop offset=".75" stop-color="#c6c3b4"/><stop offset="1" stop-color="#cccbc0"/></linearGradient>
<clipPath id="c2"><rect width="148.3" height="83"/></clipPath>
</defs>
<g clip-path="url(#c2)">
<rect width="148.3" height="83" fill="url(#w2)"/>
<g filter="url(#b2)">
<path d="M34 84 C40 66 50 58 62 56 L96 60 L128 52 C140 58 147 70 150 84Z" fill="#7a8ac2"/>
<ellipse cx="82" cy="12" rx="33" ry="17" fill="#6a625c"/>
<path d="M98 4 C120 10 118 36 124 52 C128 66 128 76 124 86 L92 86 C100 66 96 46 98 30Z" fill="#7a706a"/>
<path d="M50 10 C46 26 48 44 54 50 L58 22Z" fill="#857a70"/>
<path d="M55 22 C58 8 88 8 94 24 C97 40 92 58 76 64 C62 62 54 44 55 22Z" fill="#dccfca"/>
<ellipse cx="84" cy="44" rx="8" ry="9" fill="#e6dad6"/>
<path d="M62 62 L84 62 L86 72 L62 72Z" fill="#cdbdb8"/>
<ellipse cx="71.5" cy="51.4" rx="6.4" ry="2.5" fill="#c67c78"/>
<path d="M56 18 C64 8 84 6 96 22 C84 14 70 14 58 24Z" fill="#6e645e"/>
</g>
<g filter="url(#b2s)" stroke="#3e3d4c" stroke-width="2.1">
<path d="M49.4 27.4 C54 25.4 61 26 63.4 28.4 C64 34 60 38.4 55 38.2 C50.4 37.6 48.8 32 49.4 27.4Z" fill="#c9cbc0" fill-opacity=".7"/>
<path d="M66 27 C70 23 82 22.6 85.2 25.4 C86 32 81 38.6 74 38.2 C68 37.6 65.4 32 66 27Z" fill="#c9cbc0" fill-opacity=".7"/>
</g>
</g></svg><div style="position:absolute;left:1047.00px;top:215.80px;width:109.20px;height:17.40px;background:rgba(44,44,48,.74);"></div><div style="position:absolute;top:218.75px;height:15.60px;line-height:15.60px;font-size:12.0px;color:#dedede;font-weight:400;font-family:'Liberation Sans';white-space:nowrap;;left:1050.40px;">Юлия Бондаренко</div><div style="position:absolute;left:1046.60px;top:240.40px;width:149.30px;height:82.40px;background:#242424;"></div><div style="position:absolute;left:1083.70px;top:244.00px;width:74.50px;height:74.00px;background:#7d56c4;"></div><div style="position:absolute;top:258.95px;height:46.00px;line-height:46.00px;font-size:41.5px;color:#ffffff;font-weight:400;font-family:'Liberation Sans';white-space:nowrap;;left:921.00px;width:400px;text-align:center;">A</div><div style="position:absolute;left:1046.60px;top:305.60px;width:141.00px;height:16.40px;background:rgba(48,48,48,.78);"></div><svg style="position:absolute;left:1049.42px;top:307.35px;" width="12.3" height="13.3" viewBox="0 0 13 14"><g fill="#e04040" stroke="none"><rect x="4.2" y="1" width="4.6" height="7.6" rx="2.3"/><path d="M2.4 6 Q2.4 10.4 6.5 10.4 Q10.6 10.4 10.6 6" fill="none" stroke="#e04040" stroke-width="1.4"/><rect x="5.8" y="10.4" width="1.4" height="2"/><rect x="3.8" y="12" width="5.4" height="1.3"/></g><path d="M.8 13.2 L12 .8" stroke="#f04848" stroke-width="1.6"/></svg><div style="position:absolute;top:306.81px;height:15.47px;line-height:15.47px;font-size:11.9px;color:#ececec;font-weight:400;font-family:'Liberation Sans';white-space:nowrap;letter-spacing:-.06px;;left:1067.20px;">Анастасия Зайчикова</div><div style="position:absolute;left:1046.60px;top:329.20px;width:149.30px;height:83.40px;background:#242424;"></div><svg style="position:absolute;left:1084.00px;top:333.30px;" width="74.2" height="74" viewBox="0 0 74.2 74">
<defs><filter id="b4" x="-20%" y="-20%" width="140%" height="140%"><feGaussianBlur stdDeviation="1.3"/></filter>
<linearGradient id="w4" x1="0" y1="0" x2="1" y2=".7"><stop offset="0" stop-color="#c98a38"/><stop offset=".55" stop-color="#d99c4c"/><stop offset=".8" stop-color="#dca354"/><stop offset="1" stop-color="#d59a48"/></linearGradient>
<clipPath id="c4"><rect width="74.2" height="74"/></clipPath></defs>
<g clip-path="url(#c4)">
<rect width="74.2" height="74" fill="url(#w4)"/>
<g filter="url(#b4)">
<path d="M0 76 L2 67 C10 58 20 53 25 52 L37 63 L48 55 C58 57 66 62 71 68 L74 76Z" fill="#2a2220"/>
<path d="M28 46 L47 48 L46 58 L37 63 L27 54Z" fill="#ba8560"/>
<path d="M15 30 C12 10 25 4.6 36 5.6 C49 5.6 58.4 14 56.4 30 C55.6 35 54 37 52.6 38 L48 22 L30 24 C27 34 28 44 24 53 C17 49 15 40 15 30Z" fill="#3a1413"/>
<path d="M27 30 C27 22 33 20 40 20 C47 20 52.4 24 52.4 34 C52.4 43 47 49.6 40 49.6 C32 49.6 27 42 27 30Z" fill="#c68e6c"/>
<ellipse cx="43" cy="38" rx="6" ry="7" fill="#d29c7a"/>
<path d="M25 24 C30 15 46 14 53 26 C46 21 34 22 27 31Z" fill="#431816"/>
<rect x="31" y="29.6" width="7" height="2" rx="1" fill="#6a4436"/>
<rect x="43" y="29.6" width="7" height="2" rx="1" fill="#6a4436"/>
<ellipse cx="42" cy="42.6" rx="4.6" ry="1.3" fill="#a8604e"/>
</g>
</g></svg><div style="position:absolute;left:1046.60px;top:394.80px;width:129.20px;height:17.60px;background:rgba(48,48,48,.8);"></div><svg style="position:absolute;left:1049.42px;top:397.15px;" width="12.3" height="13.3" viewBox="0 0 13 14"><g fill="#e04040" stroke="none"><rect x="4.2" y="1" width="4.6" height="7.6" rx="2.3"/><path d="M2.4 6 Q2.4 10.4 6.5 10.4 Q10.6 10.4 10.6 6" fill="none" stroke="#e04040" stroke-width="1.4"/><rect x="5.8" y="10.4" width="1.4" height="2"/><rect x="3.8" y="12" width="5.4" height="1.3"/></g><path d="M.8 13.2 L12 .8" stroke="#f04848" stroke-width="1.6"/></svg><div style="position:absolute;top:396.62px;height:15.47px;line-height:15.47px;font-size:11.9px;color:#ececec;font-weight:400;font-family:'Liberation Sans';white-space:nowrap;;left:1067.00px;">Дегтяренко Тетяна</div><div style="position:absolute;left:1046.60px;top:418.40px;width:149.30px;height:83.60px;background:#242424;"></div><svg style="position:absolute;left:1084.00px;top:423.00px;" width="74.2" height="74.6" viewBox="0 0 74.2 74.6">
<defs><filter id="b5" x="-20%" y="-20%" width="140%" height="140%"><feGaussianBlur stdDeviation="1.4"/></filter>
<filter id="b5s" x="-20%" y="-20%" width="140%" height="140%"><feGaussianBlur stdDeviation=".6"/></filter>
<linearGradient id="w5" x1="0" y1="0" x2="1" y2="0"><stop offset="0" stop-color="#f1e8e6"/><stop offset=".45" stop-color="#ece0dc"/><stop offset=".72" stop-color="#e2cbb9"/><stop offset="1" stop-color="#ddc0a8"/></linearGradient>
<clipPath id="c5"><rect width="74.2" height="74.6"/></clipPath></defs>
<g clip-path="url(#c5)">
<rect width="74.2" height="74.6" fill="url(#w5)"/>
<g filter="url(#b5)">
<path d="M0 50 C8 46 18 46 24 50 V76 H0Z" fill="#f7f5f3"/>
<rect x="64" y="38" width="12" height="7" fill="#7d5c48"/>
<rect x="60" y="46" width="16" height="30" fill="#f4f1f0"/>
<path d="M18.5 40 C16 18 30 7 44 7.5 C60 8 68 24 66.4 40 C66 48 62 54 58 58 L54 40 L30 38 C28 50 30 58 26 62 C20 56 19 48 18.5 40Z" fill="#87583a"/>
<path d="M27 40 C27 30 32 24 41 24 C50 24 54.4 32 54.4 42 C54.4 54 48 61 40.4 61 C32 61 27 52 27 40Z" fill="#d9b2a2"/>
<path d="M22 36 C26 16 50 10 64 34 C54 24 38 24 27 38Z" fill="#9a6944"/>
<path d="M36 12 C48 10 60 18 62 32 C54 22 46 18 36 12Z" fill="#a97b52"/>
<path d="M22 60 C24 52 28 54 30 60 L30 76 H20Z" fill="#4a2f26"/>
<path d="M52 58 C56 52 60 54 60 60 L60 76 H50Z" fill="#553628"/>
<ellipse cx="40.6" cy="54.4" rx="5.4" ry="1.8" fill="#c07e86"/>
<path d="M26 62 C32 66 50 66 56 62 L60 76 H22Z" fill="#cfa898"/>
</g>
<g filter="url(#b5s)"><rect x="25.8" y="34.4" width="13" height="6.6" rx="1.6" fill="#6a5a5e" fill-opacity=".45" stroke="#2a2226" stroke-width="1.1"/><rect x="41.6" y="34.6" width="12.8" height="6.6" rx="1.6" fill="#6a5a5e" fill-opacity=".45" stroke="#2a2226" stroke-width="1.1"/><path d="M25 34.6 H55" stroke="#1c1618" stroke-width="1.9"/></g>
</g></svg><div style="position:absolute;left:1046.60px;top:484.20px;width:107.80px;height:17.20px;background:rgba(48,48,48,.8);"></div><svg style="position:absolute;left:1049.42px;top:486.35px;" width="12.3" height="13.3" viewBox="0 0 13 14"><g fill="#e04040" stroke="none"><rect x="4.2" y="1" width="4.6" height="7.6" rx="2.3"/><path d="M2.4 6 Q2.4 10.4 6.5 10.4 Q10.6 10.4 10.6 6" fill="none" stroke="#e04040" stroke-width="1.4"/><rect x="5.8" y="10.4" width="1.4" height="2"/><rect x="3.8" y="12" width="5.4" height="1.3"/></g><path d="M.8 13.2 L12 .8" stroke="#f04848" stroke-width="1.6"/></svg><div style="position:absolute;top:485.81px;height:15.47px;line-height:15.47px;font-size:11.9px;color:#ececec;font-weight:400;font-family:'Liberation Sans';white-space:nowrap;;left:1067.60px;">Татьяна Гусева</div><div style="position:absolute;left:1046.60px;top:508.00px;width:149.30px;height:82.00px;background:#242424;"></div><div style="position:absolute;top:541.05px;height:18.20px;line-height:18.20px;font-size:14px;color:#ffffff;font-weight:700;font-family:'Liberation Sans';white-space:nowrap;;left:921.60px;width:400px;text-align:center;">Крикуненко</div>
<div style="position:absolute;left:1046.60px;top:573.40px;width:72.00px;height:17.20px;background:#2e2e2e;"></div><div style="position:absolute;top:575.51px;height:15.67px;line-height:15.67px;font-size:12.05px;color:#f2f2f2;font-weight:400;font-family:'Liberation Sans';white-space:nowrap;;left:1050.80px;">Крикуненко</div>
<div style="position:absolute;top:555.75px;height:24.00px;line-height:24.00px;font-size:18.55px;color:rgba(255,255,255,.39);font-weight:400;font-family:'Liberation Sans';white-space:nowrap;;left:915.20px;">Активация Windows</div><div style="position:absolute;top:580.15px;height:18.00px;line-height:18.00px;font-size:13.97px;color:rgba(255,255,255,.39);font-weight:400;font-family:'Liberation Sans';white-space:nowrap;;left:915.20px;">Чтобы активировать Windows, перейдите в</div><div style="position:absolute;top:598.45px;height:18.00px;line-height:18.00px;font-size:13.95px;color:rgba(255,255,255,.39);font-weight:400;font-family:'Liberation Sans';white-space:nowrap;;left:915.20px;">раздел "Параметры".</div>
<div style="position:absolute;left:0.00px;top:634.40px;width:1209.00px;height:38.60px;background:#1a1a1a;"></div><svg style="position:absolute;left:12.00px;top:638.60px;" width="24" height="23" viewBox="0 0 24 23"><rect x="8.6" y="1.6" width="6.6" height="12.4" rx="3.3" fill="#8f8f8f"/><path d="M5.6 10.4 Q5.6 17.2 12 17.2 Q18.4 17.2 18.4 10.4" fill="none" stroke="#8f8f8f" stroke-width="1.5"/><rect x="11.2" y="17.2" width="1.6" height="3.4" fill="#8f8f8f"/><rect x="8" y="20.4" width="8" height="1.5" fill="#8f8f8f"/><path d="M1.4 22 L22.8 1" stroke="#e0484c" stroke-width="1.7"/></svg><svg style="position:absolute;left:55.00px;top:648.00px;" width="8.4" height="5.2" viewBox="0 0 8.4 5.2"><path d="M.8 4.4 L4.2 1 L7.6 4.4" fill="none" stroke="#c8c8c8" stroke-width="1.3"/></svg><div style="position:absolute;top:664.05px;height:14.00px;line-height:14.00px;font-size:11.15px;color:#d6d6d6;font-weight:400;font-family:'Liberation Sans';white-space:nowrap;;left:-337.10px;width:400px;text-align:right;">Включить звук</div><svg style="position:absolute;left:112.00px;top:638.60px;" width="28" height="23" viewBox="0 0 28 23"><rect x="2.2" y="5" width="15.4" height="13" rx="2.2" fill="#8f8f8f"/><path d="M18.4 10.2 L24.8 6 V17 L18.4 12.8Z" fill="#8f8f8f"/><path d="M3 22 L24.6 1" stroke="#e0484c" stroke-width="1.7"/></svg><svg style="position:absolute;left:165.00px;top:648.00px;" width="8.4" height="5.2" viewBox="0 0 8.4 5.2"><path d="M.8 4.4 L4.2 1 L7.6 4.4" fill="none" stroke="#c8c8c8" stroke-width="1.3"/></svg><div style="position:absolute;top:664.05px;height:14.00px;line-height:14.00px;font-size:11.19px;color:#d6d6d6;font-weight:400;font-family:'Liberation Sans';white-space:nowrap;;left:83.50px;">Включить видео</div><svg style="position:absolute;left:479.60px;top:641.60px;" width="23.5" height="18" viewBox="0 0 23.5 18"><circle cx="8" cy="4.6" r="3.9" fill="#8f8f8f"/><path d="M.4 17.6 V13.6 Q.4 9.6 5.2 9.6 H10.8 Q15.6 9.6 15.6 13.6 V17.6Z" fill="#8f8f8f"/><circle cx="17.4" cy="6.2" r="3.1" fill="#8f8f8f"/><path d="M16.8 17.6 V13.2 Q16.8 11.4 15.8 10.4 H19.2 Q23 10.4 23 14 V17.6Z" fill="#8f8f8f"/></svg><div style="position:absolute;top:641.67px;height:14.56px;line-height:14.56px;font-size:11.2px;color:#d0d0d0;font-weight:400;font-family:'Liberation Sans';white-space:nowrap;;left:505.80px;">7</div><svg style="position:absolute;left:535.80px;top:648.40px;" width="8.4" height="5.2" viewBox="0 0 8.4 5.2"><path d="M.8 4.4 L4.2 1 L7.6 4.4" fill="none" stroke="#c8c8c8" stroke-width="1.3"/></svg><div style="position:absolute;top:664.05px;height:14.00px;line-height:14.00px;font-size:11.09px;color:#d6d6d6;font-weight:400;font-family:'Liberation Sans';white-space:nowrap;;left:464.50px;">Участники</div><svg style="position:absolute;left:579.00px;top:641.60px;" width="19.6" height="17.4" viewBox="0 0 19.6 17.4"><path d="M3 .4 H16.6 Q19.2 .4 19.2 3 V10 Q19.2 12.6 16.6 12.6 H9.4 L5.2 16.8 V12.6 H3 Q.4 12.6 .4 10 V3 Q.4 .4 3 .4Z" fill="#8f8f8f"/></svg><div style="position:absolute;top:664.05px;height:14.00px;line-height:14.00px;font-size:11.1px;color:#d6d6d6;font-weight:400;font-family:'Liberation Sans';white-space:nowrap;;left:579.90px;">Чат</div><div style="position:absolute;left:679.10px;top:641.80px;width:22.30px;height:17.20px;background:#23d959;border-radius:3.2px;"></div><svg style="position:absolute;left:685.60px;top:645.20px;" width="9.4" height="10.6" viewBox="0 0 9.4 10.6"><path d="M4.7 .6 L8.8 4.8 H5.9 V10 H3.5 V4.8 H.6Z" fill="#101010"/></svg><div style="position:absolute;top:664.05px;height:14.00px;line-height:14.00px;font-size:11.16px;color:#23d959;font-weight:400;font-family:'Liberation Sans';white-space:nowrap;;left:633.70px;">Демонстрация экрана</div><svg style="position:absolute;left:782.60px;top:640.20px;" width="20" height="20" viewBox="0 0 20 20"><circle cx="10" cy="10" r="8.9" fill="none" stroke="#8f8f8f" stroke-width="1.3"/><circle cx="10" cy="10" r="6.5" fill="#8f8f8f"/></svg><div style="position:absolute;top:664.05px;height:14.00px;line-height:14.00px;font-size:10.97px;color:#d6d6d6;font-weight:400;font-family:'Liberation Sans';white-space:nowrap;;left:774.40px;">Запись</div><svg style="position:absolute;left:857.60px;top:640.00px;" width="23" height="20" viewBox="0 0 23 20"><circle cx="9.4" cy="10.6" r="8.3" fill="#8f8f8f"/><circle cx="6.6" cy="8.4" r="1.1" fill="#1a1a1a"/><circle cx="12" cy="8.4" r="1.1" fill="#1a1a1a"/><path d="M5 11.6 Q9.4 17 13.8 11.6Z" fill="#1a1a1a"/><circle cx="18" cy="3.2" r="4" fill="#1a1a1a"/><path d="M18 .4V5.6M15.4 3H20.6" stroke="#8f8f8f" stroke-width="1.2"/></svg><div style="position:absolute;top:664.05px;height:14.00px;line-height:14.00px;font-size:10.8px;color:#d6d6d6;font-weight:400;font-family:'Liberation Sans';white-space:nowrap;;left:846.90px;">Реакции</div><div style="position:absolute;left:1180.80px;top:646.40px;width:40.00px;height:24.80px;background:#b92326;border-radius:5.5px;"></div><div style="position:absolute;top:650.95px;height:15.99px;line-height:15.99px;font-size:12.3px;color:#ffffff;font-weight:400;font-family:'Liberation Sans';white-space:nowrap;-webkit-text-stroke:.35px #fff;left:1191.20px;">Вы</div>
</div>
</div>
</body>
</html>
